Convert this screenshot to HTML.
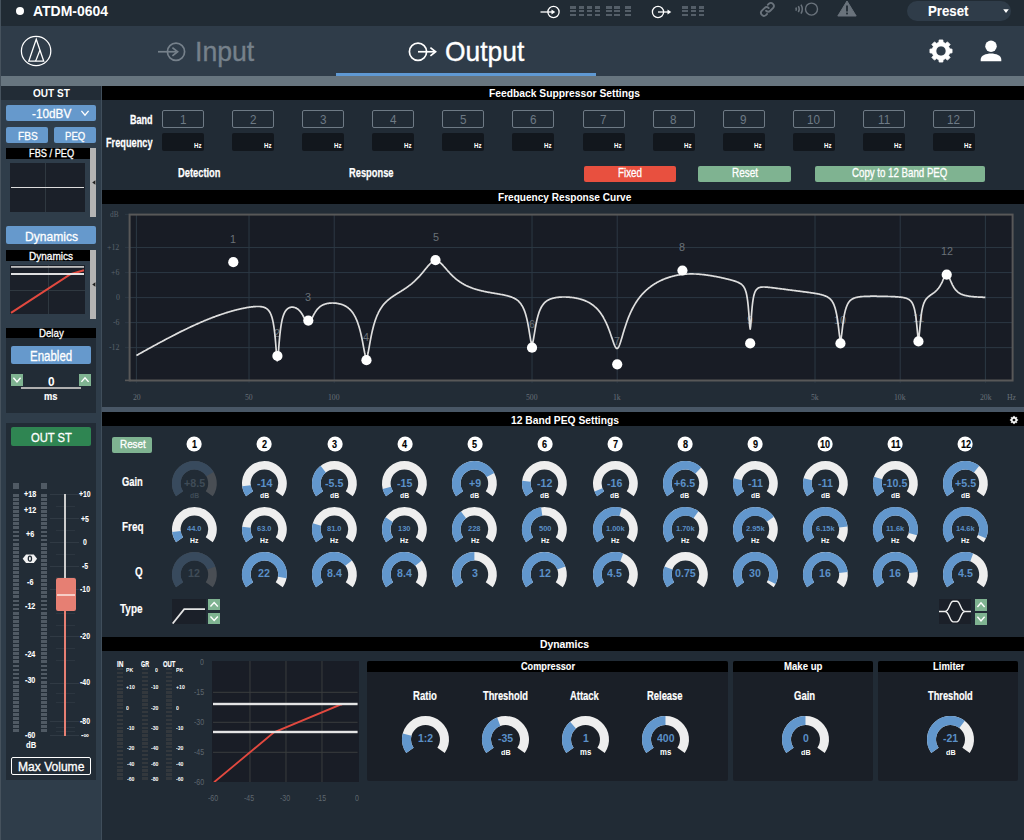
<!DOCTYPE html>
<html lang="en"><head><meta charset="utf-8"><title>ATDM-0604</title>
<style>
html,body{margin:0;padding:0;background:#212b35;}
body{width:1024px;height:840px;position:relative;overflow:hidden;font-family:"Liberation Sans",sans-serif;}
.a{position:absolute;display:block;}
.t{position:absolute;white-space:nowrap;line-height:1;transform-origin:0 0;font-family:"Liberation Sans",sans-serif;}
.b{font-weight:bold;}
.ser{font-family:"Liberation Serif",serif;}
</style></head><body>
<div class="a" style="left:0px;top:0px;width:1024px;height:26px;background:#212b34;"></div>
<div class="a" style="left:16px;top:7px;width:8px;height:8px;background:#fff;border-radius:50%;"></div>
<span class="t b" style="left:32.5px;top:2px;font-size:14.97px;line-height:17px;color:#fff;transform:scaleX(0.933);">ATDM-0604</span>
<svg class="a" style="left:536px;top:2px;" width="36" height="20" viewBox="0 0 36 20">
<circle cx="17.5" cy="10" r="5.6" fill="none" stroke="#fff" stroke-width="1.3"/><path d="M4.5 10H17" stroke="#fff" stroke-width="1.3" fill="none"/><path d="M15.5 7.6L19.3 10L15.5 12.4Z" fill="#fff"/></svg>
<div class="a" style="left:570.4px;top:5.7px;width:5.8px;height:2.9px;background:#545e68;"></div>
<div class="a" style="left:570.4px;top:9.6px;width:5.8px;height:2.9px;background:#545e68;"></div>
<div class="a" style="left:570.4px;top:13.5px;width:5.8px;height:2.9px;background:#545e68;"></div>
<div class="a" style="left:578.5px;top:5.7px;width:5.8px;height:2.9px;background:#545e68;"></div>
<div class="a" style="left:578.5px;top:9.6px;width:5.8px;height:2.9px;background:#545e68;"></div>
<div class="a" style="left:578.5px;top:13.5px;width:5.8px;height:2.9px;background:#545e68;"></div>
<div class="a" style="left:586.6px;top:5.7px;width:5.8px;height:2.9px;background:#545e68;"></div>
<div class="a" style="left:586.6px;top:9.6px;width:5.8px;height:2.9px;background:#545e68;"></div>
<div class="a" style="left:586.6px;top:13.5px;width:5.8px;height:2.9px;background:#545e68;"></div>
<div class="a" style="left:594.7px;top:5.7px;width:5.8px;height:2.9px;background:#545e68;"></div>
<div class="a" style="left:594.7px;top:9.6px;width:5.8px;height:2.9px;background:#545e68;"></div>
<div class="a" style="left:594.7px;top:13.5px;width:5.8px;height:2.9px;background:#545e68;"></div>
<div class="a" style="left:605.8px;top:5.7px;width:5.8px;height:2.9px;background:#545e68;"></div>
<div class="a" style="left:605.8px;top:9.6px;width:5.8px;height:2.9px;background:#545e68;"></div>
<div class="a" style="left:605.8px;top:13.5px;width:5.8px;height:2.9px;background:#545e68;"></div>
<div class="a" style="left:613.8px;top:5.7px;width:5.8px;height:2.9px;background:#545e68;"></div>
<div class="a" style="left:613.8px;top:9.6px;width:5.8px;height:2.9px;background:#545e68;"></div>
<div class="a" style="left:613.8px;top:13.5px;width:5.8px;height:2.9px;background:#545e68;"></div>
<div class="a" style="left:625px;top:5.7px;width:5.8px;height:2.9px;background:#545e68;"></div>
<div class="a" style="left:625px;top:9.6px;width:5.8px;height:2.9px;background:#545e68;"></div>
<div class="a" style="left:625px;top:13.5px;width:5.8px;height:2.9px;background:#545e68;"></div>
<svg class="a" style="left:648px;top:2px;" width="36" height="20" viewBox="0 0 36 20">
<circle cx="10" cy="10" r="5.6" fill="none" stroke="#fff" stroke-width="1.3"/><path d="M10 10H21" stroke="#fff" stroke-width="1.3" fill="none"/><path d="M19.5 7.6L23.3 10L19.5 12.4Z" fill="#fff"/></svg>
<div class="a" style="left:682.4px;top:5.7px;width:5.8px;height:2.9px;background:#545e68;"></div>
<div class="a" style="left:682.4px;top:9.6px;width:5.8px;height:2.9px;background:#545e68;"></div>
<div class="a" style="left:682.4px;top:13.5px;width:5.8px;height:2.9px;background:#545e68;"></div>
<div class="a" style="left:690.5px;top:5.7px;width:5.8px;height:2.9px;background:#545e68;"></div>
<div class="a" style="left:690.5px;top:9.6px;width:5.8px;height:2.9px;background:#545e68;"></div>
<div class="a" style="left:690.5px;top:13.5px;width:5.8px;height:2.9px;background:#545e68;"></div>
<div class="a" style="left:698.6px;top:5.7px;width:5.8px;height:2.9px;background:#545e68;"></div>
<div class="a" style="left:698.6px;top:9.6px;width:5.8px;height:2.9px;background:#545e68;"></div>
<div class="a" style="left:698.6px;top:13.5px;width:5.8px;height:2.9px;background:#545e68;"></div>
<svg class="a" style="left:757.7px;top:0.1px" width="18.8" height="18.8" viewBox="0 0 20 20"><g fill="none" stroke="#6a737c" stroke-width="2" stroke-linecap="round"><path d="M8.6 11.4a3.2 3.2 0 0 0 4.5 0l3-3a3.2 3.2 0 0 0-4.5-4.5l-1.2 1.2"/><path d="M11.4 8.6a3.2 3.2 0 0 0-4.5 0l-3 3a3.2 3.2 0 0 0 4.5 4.5l1.2-1.2"/></g></svg>
<svg class="a" style="left:794px;top:2px;" width="28" height="18" viewBox="0 0 28 18">
<g fill="none" stroke="#6a737c" stroke-width="1.5"><circle cx="17.5" cy="7.1" r="6" stroke-width="1.4"/><path d="M6.96 2.6A8.7 8.7 0 0 1 6.96 11.6"/><path d="M4.35 4.1A5.7 5.7 0 0 1 4.35 10.1"/><path d="M1.8 5.5A2.8 2.8 0 0 1 1.8 8.7"/></g></svg>
<svg class="a" style="left:836px;top:-0.7px;" width="22" height="20" viewBox="0 0 22 20">
<path d="M11 2L20.2 17H1.8Z" fill="#6a737c" stroke="#6a737c" stroke-width="1" stroke-linejoin="round"/><rect x="10.1" y="6.5" width="1.8" height="6" fill="#212b34"/><rect x="10.1" y="13.6" width="1.8" height="1.8" fill="#212b34"/></svg>
<div class="a" style="left:907px;top:1px;width:103.5px;height:20px;background:#2f3c49;border-radius:10px;"></div>
<span class="t b" style="left:927.5px;top:2px;font-size:14.97px;line-height:17px;color:#fff;transform:scaleX(0.885);-webkit-text-stroke:0.09px #fff;">Preset</span>
<svg class="a" style="left:1002px;top:8px;" width="8" height="6" viewBox="0 0 8 6">
<path d="M1.2 1.2H6.8L4 5Z" fill="#fff"/></svg>
<div class="a" style="left:0px;top:26px;width:1024px;height:50px;background:#2f3c49;"></div>
<div class="a" style="left:0px;top:76px;width:1024px;height:10px;background:#67757f;"></div>
<div class="a" style="left:336px;top:72.6px;width:260px;height:3.4px;background:#5f99d3;"></div>
<svg class="a" style="left:18px;top:33px;" width="36" height="36" viewBox="0 0 36 36">
<circle cx="18.1" cy="18" r="14.7" fill="none" stroke="#fff" stroke-width="1.25"/><path d="M18.25 6.2L10.75 28.2H25.75Z" fill="none" stroke="#fff" stroke-width="1.25" stroke-linejoin="miter"/><path d="M21.9 17.3L17.6 28.2" fill="none" stroke="#fff" stroke-width="1.25"/></svg>
<svg class="a" style="left:154px;top:40px;" width="36" height="24" viewBox="0 0 36 24">
<circle cx="22" cy="11.75" r="8.6" fill="none" stroke="#76818b" stroke-width="1.7"/><path d="M4 11.75H22" stroke="#76818b" stroke-width="1.7" fill="none"/><path d="M18.4 7.6L23.6 11.75L18.4 15.9" fill="none" stroke="#76818b" stroke-width="1.7"/></svg>
<span class="t" style="left:194.5px;top:36px;font-size:27.25px;line-height:31px;color:#76818b;transform:scaleX(0.977);-webkit-text-stroke:0.35px #76818b;">Input</span>
<svg class="a" style="left:406px;top:40px;" width="36" height="24" viewBox="0 0 36 24">
<circle cx="12" cy="11.75" r="8.6" fill="none" stroke="#fff" stroke-width="1.7"/><path d="M12 11.75H28.5" stroke="#fff" stroke-width="1.7" fill="none"/><path d="M24.4 7.6L29.6 11.75L24.4 15.9" fill="none" stroke="#fff" stroke-width="1.7"/></svg>
<span class="t" style="left:444.5px;top:36px;font-size:27.25px;line-height:31px;color:#fff;transform:scaleX(0.969);-webkit-text-stroke:0.35px #fff;">Output</span>
<svg class="a" style="left:928.8px;top:38.9px;" width="24" height="24" viewBox="0 0 24 24">
<path d="M9.85 3.36L10.16 0.95L13.84 0.95L14.15 3.36L16.59 4.38L18.51 2.89L21.11 5.49L19.62 7.41L20.64 9.85L23.05 10.16L23.05 13.84L20.64 14.15L19.62 16.59L21.11 18.51L18.51 21.11L16.59 19.62L14.15 20.64L13.84 23.05L10.16 23.05L9.85 20.64L7.41 19.62L5.49 21.11L2.89 18.51L4.38 16.59L3.36 14.15L0.95 13.84L0.95 10.16L3.36 9.85L4.38 7.41L2.89 5.49L5.49 2.89L7.41 4.38ZM6.90 12.00a5.10 5.10 0 1 0 10.20 0a5.10 5.10 0 1 0 -10.20 0Z" fill="#fff" fill-rule="evenodd" stroke="#fff" stroke-width="0.8" stroke-linejoin="round"/>
</svg>
<svg class="a" style="left:979px;top:40px;" width="24" height="24" viewBox="0 0 24 24">
<circle cx="12" cy="6.2" r="5.75" fill="#fff"/><path d="M1.7 21.2V19.4C1.7 15.6 7 13.5 12 13.5S22.3 15.6 22.3 19.4V21.2Z" fill="#fff"/></svg>
<div class="a" style="left:0px;top:86px;width:102px;height:754px;background:#2f3d4a;"></div>
<div class="a" style="left:0px;top:0px;width:1.2px;height:840px;background:#46525d;"></div>
<div class="a" style="left:100.6px;top:86px;width:1.4px;height:754px;background:#404e5b;"></div>
<div class="a" style="left:1px;top:86px;width:100px;height:14px;background:#222c36;"></div>
<span class="t b" style="left:32.5px;top:87px;font-size:11.12px;line-height:12px;color:#fff;transform:scaleX(0.905);">OUT ST</span>
<div class="a" style="left:6px;top:105px;width:90px;height:16px;background:#6699cc;border-radius:2px;"></div>
<span class="t" style="left:32px;top:106px;font-size:13.08px;line-height:15px;color:#fff;transform:scaleX(0.900);-webkit-text-stroke:0.3px #fff;">-10dBV</span>
<svg class="a" style="left:79px;top:107px;" width="12" height="12" viewBox="0 0 12 12">
<path d="M2.4 3.84L6 8.16L9.6 3.84" fill="none" stroke="#fff" stroke-width="1.3"/></svg>
<div class="a" style="left:6px;top:127px;width:42px;height:16px;background:#6699cc;border-radius:2px;"></div>
<div class="a" style="left:54px;top:127px;width:42px;height:16px;background:#6699cc;border-radius:2px;"></div>
<span class="t" style="left:17.5px;top:129px;font-size:11.63px;line-height:13px;color:#fff;transform:scaleX(0.873);-webkit-text-stroke:0.3px #fff;">FBS</span>
<span class="t" style="left:65px;top:129px;font-size:11.63px;line-height:13px;color:#fff;transform:scaleX(0.825);-webkit-text-stroke:0.3px #fff;">PEQ</span>
<div class="a" style="left:6px;top:148px;width:84px;height:11px;background:#000;"></div>
<span class="t" style="left:28.5px;top:147px;font-size:11.26px;line-height:12px;color:#fff;transform:scaleX(0.821);-webkit-text-stroke:0.3px #fff;">FBS / PEQ</span>
<div class="a" style="left:90px;top:148px;width:6px;height:69px;background:#b4b4b4;"></div>
<svg class="a" style="left:91.5px;top:179.8px;" width="4" height="5" viewBox="0 0 4 5">
<path d="M0.2 2.5L3.4 0.3V4.7Z" fill="#222"/></svg>
<div class="a" style="left:10px;top:163px;width:75px;height:49px;background:#1b2029;"></div>
<div class="a" style="left:44.8px;top:163px;width:1px;height:49px;background:#2f3840;"></div>
<div class="a" style="left:11px;top:186.6px;width:73px;height:1.8px;background:#dcdcdc;"></div>
<div class="a" style="left:6px;top:226px;width:90px;height:18.4px;background:#6699cc;border-radius:2px;"></div>
<span class="t" style="left:24.75px;top:229px;font-size:13.44px;line-height:15px;color:#fff;transform:scaleX(0.898);-webkit-text-stroke:0.3px #fff;">Dynamics</span>
<div class="a" style="left:6px;top:250px;width:84px;height:11px;background:#000;"></div>
<span class="t" style="left:29px;top:250px;font-size:10.76px;line-height:12px;color:#fff;transform:scaleX(0.932);-webkit-text-stroke:0.3px #fff;">Dynamics</span>
<div class="a" style="left:90px;top:250px;width:6px;height:69.4px;background:#b4b4b4;"></div>
<svg class="a" style="left:91.5px;top:282.2px;" width="4" height="5" viewBox="0 0 4 5">
<path d="M0.2 2.5L3.4 0.3V4.7Z" fill="#222"/></svg>
<div class="a" style="left:10px;top:265px;width:75px;height:49px;background:#1b2029;"></div>
<div class="a" style="left:47.7px;top:265px;width:1px;height:49px;background:#2f3840;"></div>
<div class="a" style="left:10px;top:290px;width:75px;height:1px;background:#2f3840;"></div>
<svg class="a" style="left:10px;top:265px;" width="75" height="49" viewBox="0 0 75 49">
<path d="M1 47.8L60.5 9.2L74 5.2" fill="none" stroke="#e2493f" stroke-width="2"/><rect x="1" y="1" width="73" height="1.8" fill="#bdbdbd"/><rect x="1" y="8" width="73" height="2" fill="#f0f0f0" opacity="0.92"/></svg>
<div class="a" style="left:6px;top:327.5px;width:90px;height:10.5px;background:#000;"></div>
<div class="a" style="left:6px;top:338px;width:90px;height:75px;background:#222c36;"></div>
<span class="t" style="left:39px;top:327px;font-size:11.41px;line-height:12px;color:#fff;transform:scaleX(0.848);-webkit-text-stroke:0.3px #fff;">Delay</span>
<div class="a" style="left:11px;top:346px;width:80px;height:18.4px;background:#6699cc;border-radius:2px;"></div>
<span class="t" style="left:30px;top:348px;font-size:14.03px;line-height:16px;color:#fff;transform:scaleX(0.821);-webkit-text-stroke:0.3px #fff;">Enabled</span>
<div class="a" style="left:11px;top:374.4px;width:12px;height:11.6px;background:#7fb391;"></div>
<svg class="a" style="left:11px;top:374.4px;" width="12" height="11.6" viewBox="0 0 12 11.6">
<path d="M2.4 3.71L6 7.89L9.6 3.71" fill="none" stroke="#fff" stroke-width="1.4"/></svg>
<div class="a" style="left:79px;top:374.4px;width:12px;height:11.6px;background:#7fb391;"></div>
<svg class="a" style="left:79px;top:374.4px;" width="12" height="11.6" viewBox="0 0 12 11.6">
<path d="M2.4 7.89L6 3.71L9.6 7.89" fill="none" stroke="#fff" stroke-width="1.4"/></svg>
<span class="t b" style="left:48px;top:375px;font-size:12.35px;line-height:14px;color:#fff;transform:scaleX(0.961);">0</span>
<div class="a" style="left:21px;top:387.3px;width:60px;height:1.8px;background:#b0b0b0;"></div>
<span class="t b" style="left:44.3px;top:390px;font-size:11.6px;line-height:12px;color:#fff;transform:scaleX(0.805);-webkit-text-stroke:0.15px #fff;">ms</span>
<div class="a" style="left:6px;top:423px;width:90px;height:356.5px;background:#222c36;"></div>
<div class="a" style="left:11px;top:427px;width:80px;height:18.6px;background:#2f8552;border-radius:2px;"></div>
<span class="t" style="left:30.6px;top:430px;font-size:12.72px;line-height:15px;color:#fff;transform:scaleX(0.881);-webkit-text-stroke:0.3px #fff;">OUT ST</span>
<div class="a" style="left:13px;top:482.5px;width:6px;height:6.9px;background:#505a64;"></div>
<div class="a" style="left:13px;top:494.4px;width:6px;height:239.6px;background:repeating-linear-gradient(to bottom,#505a64 0,#505a64 2.8px,transparent 2.8px,transparent 4.06px);"></div>
<div class="a" style="left:41px;top:482.5px;width:6px;height:6.9px;background:#505a64;"></div>
<div class="a" style="left:41px;top:494.4px;width:6px;height:239.6px;background:repeating-linear-gradient(to bottom,#505a64 0,#505a64 2.8px,transparent 2.8px,transparent 4.06px);"></div>
<span class="t b" style="left:23.92px;top:489px;font-size:8.43px;line-height:10px;color:#fff;transform:scaleX(0.850);-webkit-text-stroke:0.08px #fff;">+18</span>
<span class="t b" style="left:23.92px;top:505px;font-size:8.43px;line-height:10px;color:#fff;transform:scaleX(0.850);-webkit-text-stroke:0.08px #fff;">+12</span>
<span class="t b" style="left:25.92px;top:529px;font-size:8.43px;line-height:10px;color:#fff;transform:scaleX(0.850);-webkit-text-stroke:0.08px #fff;">+6</span>
<span class="t b" style="left:26.81px;top:577px;font-size:8.43px;line-height:10px;color:#fff;transform:scaleX(0.850);-webkit-text-stroke:0.08px #fff;">-6</span>
<span class="t b" style="left:24.82px;top:601px;font-size:8.43px;line-height:10px;color:#fff;transform:scaleX(0.850);-webkit-text-stroke:0.08px #fff;">-12</span>
<span class="t b" style="left:24.82px;top:649px;font-size:8.43px;line-height:10px;color:#fff;transform:scaleX(0.850);-webkit-text-stroke:0.08px #fff;">-24</span>
<span class="t b" style="left:24.82px;top:675px;font-size:8.43px;line-height:10px;color:#fff;transform:scaleX(0.850);-webkit-text-stroke:0.08px #fff;">-30</span>
<span class="t b" style="left:24.82px;top:730px;font-size:8.43px;line-height:10px;color:#fff;transform:scaleX(0.850);-webkit-text-stroke:0.08px #fff;">-60</span>
<span class="t b" style="left:25.69px;top:740px;font-size:9.01px;line-height:10px;color:#fff;transform:scaleX(0.850);-webkit-text-stroke:0.08px #fff;">dB</span>
<svg class="a" style="left:22px;top:553px;" width="16" height="12" viewBox="0 0 16 12">
<path d="M0.7 5.7L4 1.5H11.8L15.1 5.7L11.8 9.9H4Z" fill="#f2f2f2"/><ellipse cx="7.9" cy="5.7" rx="1.6" ry="2.5" fill="none" stroke="#222c36" stroke-width="1.3"/></svg>
<div class="a" style="left:50px;top:493.5px;width:29px;height:1px;background:#303a44;"></div>
<div class="a" style="left:50px;top:518.25px;width:29px;height:1px;background:#303a44;"></div>
<div class="a" style="left:50px;top:541.75px;width:29px;height:1px;background:#303a44;"></div>
<div class="a" style="left:50px;top:565.5px;width:29px;height:1px;background:#303a44;"></div>
<div class="a" style="left:50px;top:589px;width:29px;height:1px;background:#303a44;"></div>
<div class="a" style="left:50px;top:636px;width:29px;height:1px;background:#303a44;"></div>
<div class="a" style="left:50px;top:683px;width:29px;height:1px;background:#303a44;"></div>
<div class="a" style="left:50px;top:721px;width:29px;height:1px;background:#303a44;"></div>
<div class="a" style="left:50px;top:735px;width:29px;height:1px;background:#303a44;"></div>
<div class="a" style="left:56px;top:506px;width:19px;height:1px;background:#2c3640;"></div>
<div class="a" style="left:56px;top:530.1px;width:19px;height:1px;background:#2c3640;"></div>
<div class="a" style="left:56px;top:553.5px;width:19px;height:1px;background:#2c3640;"></div>
<div class="a" style="left:56px;top:577.2px;width:19px;height:1px;background:#2c3640;"></div>
<div class="a" style="left:56px;top:612.5px;width:19px;height:1px;background:#2c3640;"></div>
<div class="a" style="left:56px;top:624.5px;width:19px;height:1px;background:#2c3640;"></div>
<div class="a" style="left:56px;top:647.5px;width:19px;height:1px;background:#2c3640;"></div>
<div class="a" style="left:56px;top:659.5px;width:19px;height:1px;background:#2c3640;"></div>
<div class="a" style="left:56px;top:693px;width:19px;height:1px;background:#2c3640;"></div>
<div class="a" style="left:56px;top:702px;width:19px;height:1px;background:#2c3640;"></div>
<div class="a" style="left:56px;top:726.5px;width:19px;height:1px;background:#2c3640;"></div>
<div class="a" style="left:56px;top:730.5px;width:19px;height:1px;background:#2c3640;"></div>
<div class="a" style="left:64px;top:493.75px;width:2.2px;height:242px;background:#cdcdcd;"></div>
<div class="a" style="left:64px;top:600px;width:2.2px;height:135.6px;background:#e67f73;"></div>
<div class="a" style="left:56px;top:578px;width:20px;height:32.6px;background:#e67f73;border-radius:2px;"></div>
<div class="a" style="left:57px;top:593.8px;width:18px;height:1.9px;background:#f6cdc6;"></div>
<span class="t b" style="left:79.43px;top:490px;font-size:8.14px;line-height:9px;color:#fff;transform:scaleX(0.850);-webkit-text-stroke:0.07px #fff;">+10</span>
<span class="t b" style="left:81.36px;top:515px;font-size:8.14px;line-height:9px;color:#fff;transform:scaleX(0.850);-webkit-text-stroke:0.07px #fff;">+5</span>
<span class="t b" style="left:83.38px;top:538px;font-size:8.14px;line-height:9px;color:#fff;transform:scaleX(0.850);-webkit-text-stroke:0.07px #fff;">0</span>
<span class="t b" style="left:82.22px;top:562px;font-size:8.14px;line-height:9px;color:#fff;transform:scaleX(0.850);-webkit-text-stroke:0.07px #fff;">-5</span>
<span class="t b" style="left:80.3px;top:585px;font-size:8.14px;line-height:9px;color:#fff;transform:scaleX(0.850);-webkit-text-stroke:0.07px #fff;">-10</span>
<span class="t b" style="left:80.3px;top:632px;font-size:8.14px;line-height:9px;color:#fff;transform:scaleX(0.850);-webkit-text-stroke:0.07px #fff;">-20</span>
<span class="t b" style="left:80.3px;top:678px;font-size:8.14px;line-height:9px;color:#fff;transform:scaleX(0.850);-webkit-text-stroke:0.07px #fff;">-40</span>
<span class="t b" style="left:80.3px;top:717px;font-size:8.14px;line-height:9px;color:#fff;transform:scaleX(0.850);-webkit-text-stroke:0.07px #fff;">-80</span>
<span class="t b" style="left:81.47px;top:731px;font-size:8.14px;line-height:9px;color:#fff;transform:scaleX(0.900);">-∞</span>
<div class="a" style="left:11px;top:757px;width:80px;height:18px;background:transparent;border:1px solid #fff;border-radius:2px;box-sizing:border-box;"></div>
<span class="t" style="left:18px;top:760px;font-size:12.5px;line-height:14px;color:#fff;transform:scaleX(0.965);-webkit-text-stroke:0.3px #fff;">Max Volume</span>
<div class="a" style="left:102px;top:86px;width:922px;height:104px;background:#212b35;"></div>
<div class="a" style="left:102px;top:86px;width:922px;height:14px;background:#000;"></div>
<span class="t b" style="left:489px;top:87px;font-size:11.19px;line-height:12px;color:#fff;transform:scaleX(0.920);">Feedback Suppressor Settings</span>
<span class="t b" style="left:129.5px;top:112px;font-size:12.72px;line-height:15px;color:#fff;transform:scaleX(0.708);-webkit-text-stroke:0.28px #fff;">Band</span>
<span class="t b" style="left:105.5px;top:135px;font-size:12.72px;line-height:15px;color:#fff;transform:scaleX(0.723);-webkit-text-stroke:0.26px #fff;">Frequency</span>
<div class="a" style="left:162px;top:110px;width:42px;height:18px;background:transparent;border:1px solid #6e7a85;border-radius:2px;box-sizing:border-box;"></div>
<span class="t" style="left:179.75px;top:112px;font-size:12.72px;line-height:15px;color:#6e7a85;transform:scaleX(0.920);">1</span>
<div class="a" style="left:162px;top:133px;width:42px;height:18px;background:#12171d;border-radius:2px;"></div>
<span class="t b" style="left:193.75px;top:142px;font-size:6.54px;line-height:7px;color:#fff;transform:scaleX(0.938);">Hz</span>
<div class="a" style="left:232px;top:110px;width:42px;height:18px;background:transparent;border:1px solid #6e7a85;border-radius:2px;box-sizing:border-box;"></div>
<span class="t" style="left:249.75px;top:112px;font-size:12.72px;line-height:15px;color:#6e7a85;transform:scaleX(0.920);">2</span>
<div class="a" style="left:232px;top:133px;width:42px;height:18px;background:#12171d;border-radius:2px;"></div>
<span class="t b" style="left:263.75px;top:142px;font-size:6.54px;line-height:7px;color:#fff;transform:scaleX(0.938);">Hz</span>
<div class="a" style="left:302px;top:110px;width:42px;height:18px;background:transparent;border:1px solid #6e7a85;border-radius:2px;box-sizing:border-box;"></div>
<span class="t" style="left:319.75px;top:112px;font-size:12.72px;line-height:15px;color:#6e7a85;transform:scaleX(0.920);">3</span>
<div class="a" style="left:302px;top:133px;width:42px;height:18px;background:#12171d;border-radius:2px;"></div>
<span class="t b" style="left:333.75px;top:142px;font-size:6.54px;line-height:7px;color:#fff;transform:scaleX(0.938);">Hz</span>
<div class="a" style="left:372px;top:110px;width:42px;height:18px;background:transparent;border:1px solid #6e7a85;border-radius:2px;box-sizing:border-box;"></div>
<span class="t" style="left:389.75px;top:112px;font-size:12.72px;line-height:15px;color:#6e7a85;transform:scaleX(0.920);">4</span>
<div class="a" style="left:372px;top:133px;width:42px;height:18px;background:#12171d;border-radius:2px;"></div>
<span class="t b" style="left:403.75px;top:142px;font-size:6.54px;line-height:7px;color:#fff;transform:scaleX(0.938);">Hz</span>
<div class="a" style="left:442px;top:110px;width:42px;height:18px;background:transparent;border:1px solid #6e7a85;border-radius:2px;box-sizing:border-box;"></div>
<span class="t" style="left:459.75px;top:112px;font-size:12.72px;line-height:15px;color:#6e7a85;transform:scaleX(0.920);">5</span>
<div class="a" style="left:442px;top:133px;width:42px;height:18px;background:#12171d;border-radius:2px;"></div>
<span class="t b" style="left:473.75px;top:142px;font-size:6.54px;line-height:7px;color:#fff;transform:scaleX(0.938);">Hz</span>
<div class="a" style="left:512px;top:110px;width:42px;height:18px;background:transparent;border:1px solid #6e7a85;border-radius:2px;box-sizing:border-box;"></div>
<span class="t" style="left:529.75px;top:112px;font-size:12.72px;line-height:15px;color:#6e7a85;transform:scaleX(0.920);">6</span>
<div class="a" style="left:512px;top:133px;width:42px;height:18px;background:#12171d;border-radius:2px;"></div>
<span class="t b" style="left:543.75px;top:142px;font-size:6.54px;line-height:7px;color:#fff;transform:scaleX(0.938);">Hz</span>
<div class="a" style="left:582.6px;top:110px;width:42px;height:18px;background:transparent;border:1px solid #6e7a85;border-radius:2px;box-sizing:border-box;"></div>
<span class="t" style="left:600.35px;top:112px;font-size:12.72px;line-height:15px;color:#6e7a85;transform:scaleX(0.920);">7</span>
<div class="a" style="left:582.6px;top:133px;width:42px;height:18px;background:#12171d;border-radius:2px;"></div>
<span class="t b" style="left:614.35px;top:142px;font-size:6.54px;line-height:7px;color:#fff;transform:scaleX(0.938);">Hz</span>
<div class="a" style="left:652.6px;top:110px;width:42px;height:18px;background:transparent;border:1px solid #6e7a85;border-radius:2px;box-sizing:border-box;"></div>
<span class="t" style="left:670.35px;top:112px;font-size:12.72px;line-height:15px;color:#6e7a85;transform:scaleX(0.920);">8</span>
<div class="a" style="left:652.6px;top:133px;width:42px;height:18px;background:#12171d;border-radius:2px;"></div>
<span class="t b" style="left:684.35px;top:142px;font-size:6.54px;line-height:7px;color:#fff;transform:scaleX(0.938);">Hz</span>
<div class="a" style="left:722.6px;top:110px;width:42px;height:18px;background:transparent;border:1px solid #6e7a85;border-radius:2px;box-sizing:border-box;"></div>
<span class="t" style="left:740.35px;top:112px;font-size:12.72px;line-height:15px;color:#6e7a85;transform:scaleX(0.920);">9</span>
<div class="a" style="left:722.6px;top:133px;width:42px;height:18px;background:#12171d;border-radius:2px;"></div>
<span class="t b" style="left:754.35px;top:142px;font-size:6.54px;line-height:7px;color:#fff;transform:scaleX(0.938);">Hz</span>
<div class="a" style="left:792.6px;top:110px;width:42px;height:18px;background:transparent;border:1px solid #6e7a85;border-radius:2px;box-sizing:border-box;"></div>
<span class="t" style="left:807.09px;top:112px;font-size:12.72px;line-height:15px;color:#6e7a85;transform:scaleX(0.920);">10</span>
<div class="a" style="left:792.6px;top:133px;width:42px;height:18px;background:#12171d;border-radius:2px;"></div>
<span class="t b" style="left:824.35px;top:142px;font-size:6.54px;line-height:7px;color:#fff;transform:scaleX(0.938);">Hz</span>
<div class="a" style="left:862.6px;top:110px;width:42px;height:18px;background:transparent;border:1px solid #6e7a85;border-radius:2px;box-sizing:border-box;"></div>
<span class="t" style="left:877.53px;top:112px;font-size:12.72px;line-height:15px;color:#6e7a85;transform:scaleX(0.920);">11</span>
<div class="a" style="left:862.6px;top:133px;width:42px;height:18px;background:#12171d;border-radius:2px;"></div>
<span class="t b" style="left:894.35px;top:142px;font-size:6.54px;line-height:7px;color:#fff;transform:scaleX(0.938);">Hz</span>
<div class="a" style="left:932.6px;top:110px;width:42px;height:18px;background:transparent;border:1px solid #6e7a85;border-radius:2px;box-sizing:border-box;"></div>
<span class="t" style="left:947.09px;top:112px;font-size:12.72px;line-height:15px;color:#6e7a85;transform:scaleX(0.920);">12</span>
<div class="a" style="left:932.6px;top:133px;width:42px;height:18px;background:#12171d;border-radius:2px;"></div>
<span class="t b" style="left:964.35px;top:142px;font-size:6.54px;line-height:7px;color:#fff;transform:scaleX(0.938);">Hz</span>
<span class="t b" style="left:177.5px;top:165px;font-size:12.72px;line-height:15px;color:#fff;transform:scaleX(0.733);-webkit-text-stroke:0.25px #fff;">Detection</span>
<span class="t b" style="left:349px;top:165px;font-size:12.72px;line-height:15px;color:#fff;transform:scaleX(0.732);-webkit-text-stroke:0.25px #fff;">Response</span>
<div class="a" style="left:583.6px;top:165.5px;width:92px;height:16px;background:#e8503f;border-radius:2px;"></div>
<span class="t" style="left:617.5px;top:166px;font-size:12.35px;line-height:14px;color:#fff;transform:scaleX(0.794);-webkit-text-stroke:0.3px #fff;">Fixed</span>
<div class="a" style="left:698px;top:165.5px;width:93px;height:16px;background:#7fb391;border-radius:2px;"></div>
<span class="t" style="left:732px;top:166px;font-size:12.35px;line-height:14px;color:#fff;transform:scaleX(0.806);-webkit-text-stroke:0.3px #fff;">Reset</span>
<div class="a" style="left:814.6px;top:165.5px;width:170.4px;height:16px;background:#7fb391;border-radius:2px;"></div>
<span class="t" style="left:852px;top:166px;font-size:12.35px;line-height:14px;color:#fff;transform:scaleX(0.785);-webkit-text-stroke:0.3px #fff;">Copy to 12 Band PEQ</span>
<div class="a" style="left:102px;top:190px;width:922px;height:13.8px;background:#000;"></div>
<span class="t b" style="left:497.6px;top:191px;font-size:11.19px;line-height:12px;color:#fff;transform:scaleX(0.901);">Frequency Response Curve</span>
<div class="a" style="left:102px;top:204px;width:922px;height:203px;background:#222c36;"></div>
<div class="a" style="left:102px;top:407.4px;width:922px;height:5.1px;background:#495766;"></div>
<svg class="a" style="left:100px;top:204px;" width="924" height="203" viewBox="0 0 924 203">
<rect x="29" y="10" width="884" height="167" fill="#181c25"/>
<path d="M36.4 11V179" stroke="#2c3844" stroke-width="1" fill="none"/>
<path d="M149.02 11V179" stroke="#2c3844" stroke-width="1" fill="none"/>
<path d="M234.21 11V179" stroke="#2c3844" stroke-width="1" fill="none"/>
<path d="M432.02 11V179" stroke="#2c3844" stroke-width="1" fill="none"/>
<path d="M517.21 11V179" stroke="#2c3844" stroke-width="1" fill="none"/>
<path d="M715.02 11V179" stroke="#2c3844" stroke-width="1" fill="none"/>
<path d="M800.21 11V179" stroke="#2c3844" stroke-width="1" fill="none"/>
<path d="M885.4 11V179" stroke="#2c3844" stroke-width="1" fill="none"/>
<path d="M25 43.56H912" stroke="#2c3844" stroke-width="1" fill="none"/>
<path d="M25 68.58H912" stroke="#2c3844" stroke-width="1" fill="none"/>
<path d="M25 93.6H912" stroke="#2c3844" stroke-width="1" fill="none"/>
<path d="M25 118.62H912" stroke="#2c3844" stroke-width="1" fill="none"/>
<path d="M25 143.64H912" stroke="#2c3844" stroke-width="1" fill="none"/>
<path d="M25 10.4H31" stroke="#2c3844" stroke-width="1" fill="none"/>
<rect x="29.6" y="10.6" width="883" height="165.9" fill="none" stroke="#585858" stroke-width="2"/>
<path d="M25 176.4H31" stroke="#585858" stroke-width="1.6" fill="none"/>
</svg>
<span class="t" style="left:230.31px;top:233px;font-size:11.34px;line-height:12px;color:#6a7178;transform:scaleX(0.950);">1</span>
<span class="t" style="left:274.43px;top:327px;font-size:11.34px;line-height:12px;color:#6a7178;transform:scaleX(0.950);">2</span>
<span class="t" style="left:305.31px;top:291px;font-size:11.34px;line-height:12px;color:#6a7178;transform:scaleX(0.950);">3</span>
<span class="t" style="left:363.46px;top:331px;font-size:11.34px;line-height:12px;color:#6a7178;transform:scaleX(0.950);">4</span>
<span class="t" style="left:432.51px;top:231px;font-size:11.34px;line-height:12px;color:#6a7178;transform:scaleX(0.950);">5</span>
<span class="t" style="left:529.02px;top:318px;font-size:11.34px;line-height:12px;color:#6a7178;transform:scaleX(0.950);">6</span>
<span class="t" style="left:614.21px;top:335px;font-size:11.34px;line-height:12px;color:#6a7178;transform:scaleX(0.950);">7</span>
<span class="t" style="left:679.43px;top:241px;font-size:11.34px;line-height:12px;color:#6a7178;transform:scaleX(0.950);">8</span>
<span class="t" style="left:747.17px;top:314px;font-size:11.34px;line-height:12px;color:#6a7178;transform:scaleX(0.950);">9</span>
<span class="t" style="left:834.47px;top:314px;font-size:11.34px;line-height:12px;color:#6a7178;transform:scaleX(0.950);">10</span>
<span class="t" style="left:912.86px;top:312px;font-size:11.34px;line-height:12px;color:#6a7178;transform:scaleX(0.950);">11</span>
<span class="t" style="left:940.73px;top:245px;font-size:11.34px;line-height:12px;color:#6a7178;transform:scaleX(0.950);">12</span>
<svg class="a" style="left:100px;top:204px;" width="924" height="203" viewBox="0 0 924 203">
<path d="M36.4 151.5L36.9 151.2L37.4 150.9L37.9 150.7L38.4 150.4L38.9 150.1L39.4 149.8L39.9 149.5L40.4 149.3L40.9 149.0L41.4 148.7L41.9 148.4L42.4 148.1L42.9 147.9L43.4 147.6L43.9 147.3L44.4 147.0L44.9 146.7L45.4 146.5L45.9 146.2L46.4 145.9L46.9 145.6L47.4 145.4L47.9 145.1L48.4 144.8L48.9 144.5L49.4 144.3L49.9 144.0L50.4 143.7L50.9 143.4L51.4 143.2L51.9 142.9L52.4 142.6L52.9 142.3L53.4 142.1L53.9 141.8L54.4 141.5L54.9 141.2L55.4 141.0L55.9 140.7L56.4 140.4L56.9 140.2L57.4 139.9L57.9 139.6L58.4 139.3L58.9 139.1L59.4 138.8L59.9 138.5L60.4 138.3L60.9 138.0L61.4 137.7L61.9 137.5L62.4 137.2L62.9 136.9L63.4 136.7L63.9 136.4L64.4 136.1L64.9 135.9L65.4 135.6L65.9 135.3L66.4 135.1L66.9 134.8L67.4 134.5L67.9 134.3L68.4 134.0L68.9 133.8L69.4 133.5L69.9 133.2L70.4 133.0L70.9 132.7L71.4 132.5L71.9 132.2L72.4 131.9L72.9 131.7L73.4 131.4L73.9 131.2L74.4 130.9L74.9 130.7L75.4 130.4L75.9 130.1L76.4 129.9L76.9 129.6L77.4 129.4L77.9 129.1L78.4 128.9L78.9 128.6L79.3 128.4L79.8 128.1L80.3 127.9L80.8 127.6L81.3 127.4L81.8 127.1L82.3 126.9L82.8 126.7L83.3 126.4L83.8 126.2L84.3 125.9L84.8 125.7L85.3 125.4L85.8 125.2L86.3 125.0L86.8 124.7L87.3 124.5L87.8 124.2L88.3 124.0L88.8 123.8L89.3 123.5L89.8 123.3L90.3 123.1L90.8 122.8L91.3 122.6L91.8 122.4L92.3 122.1L92.8 121.9L93.3 121.7L93.8 121.4L94.3 121.2L94.8 121.0L95.3 120.8L95.8 120.5L96.3 120.3L96.8 120.1L97.3 119.9L97.8 119.6L98.3 119.4L98.8 119.2L99.3 119.0L99.8 118.8L100.3 118.5L100.8 118.3L101.3 118.1L101.8 117.9L102.3 117.7L102.8 117.5L103.3 117.2L103.8 117.0L104.3 116.8L104.8 116.6L105.3 116.4L105.8 116.2L106.3 116.0L106.8 115.8L107.3 115.6L107.8 115.4L108.3 115.2L108.8 115.0L109.3 114.8L109.8 114.6L110.3 114.4L110.8 114.2L111.3 114.0L111.8 113.8L112.3 113.6L112.8 113.4L113.3 113.2L113.8 113.1L114.3 112.9L114.8 112.7L115.3 112.5L115.8 112.3L116.3 112.1L116.8 111.9L117.3 111.8L117.8 111.6L118.3 111.4L118.8 111.2L119.3 111.1L119.8 110.9L120.3 110.7L120.8 110.5L121.3 110.4L121.8 110.2L122.3 110.0L122.8 109.9L123.3 109.7L123.8 109.5L124.3 109.4L124.8 109.2L125.3 109.0L125.8 108.9L126.3 108.7L126.8 108.6L127.3 108.4L127.8 108.3L128.3 108.1L128.8 108.0L129.3 107.8L129.8 107.7L130.3 107.5L130.8 107.4L131.3 107.2L131.8 107.1L132.3 107.0L132.8 106.8L133.3 106.7L133.8 106.5L134.3 106.4L134.8 106.3L135.3 106.1L135.8 106.0L136.3 105.9L136.8 105.8L137.3 105.6L137.8 105.5L138.3 105.4L138.8 105.3L139.3 105.2L139.8 105.0L140.3 104.9L140.8 104.8L141.3 104.7L141.8 104.6L142.3 104.5L142.8 104.4L143.3 104.3L143.8 104.2L144.3 104.1L144.8 104.0L145.3 103.9L145.8 103.8L146.3 103.7L146.8 103.6L147.3 103.5L147.8 103.4L148.3 103.4L148.8 103.3L149.3 103.2L149.8 103.1L150.3 103.1L150.8 103.0L151.3 102.9L151.8 102.9L152.3 102.8L152.8 102.8L153.3 102.7L153.8 102.7L154.3 102.6L154.8 102.6L155.3 102.6L155.8 102.5L156.3 102.5L156.8 102.5L157.3 102.5L157.8 102.5L158.3 102.5L158.8 102.5L159.3 102.5L159.8 102.5L160.3 102.6L160.8 102.6L161.3 102.7L161.8 102.8L162.3 102.9L162.8 103.0L163.3 103.1L163.8 103.2L164.2 103.4L164.7 103.6L165.2 103.8L165.7 104.1L166.2 104.3L166.7 104.7L167.2 105.1L167.7 105.5L168.2 106.0L168.7 106.6L169.2 107.2L169.7 108.0L170.2 108.9L170.7 110.0L171.2 111.2L171.7 112.6L172.2 114.3L172.7 116.3L173.2 118.7L173.7 121.6L174.2 125.0L174.7 129.1L175.2 133.9L175.7 139.7L176.2 146.2L176.7 152.6L177.2 156.8L177.7 156.1L178.2 151.1L178.7 144.5L179.2 138.1L179.7 132.5L180.2 127.8L180.7 123.9L181.2 120.6L181.7 117.9L182.2 115.5L182.7 113.6L183.2 112.0L183.7 110.6L184.2 109.4L184.7 108.4L185.2 107.5L185.7 106.7L186.2 106.1L186.7 105.5L187.2 105.1L187.7 104.7L188.2 104.3L188.7 104.0L189.2 103.8L189.7 103.6L190.2 103.4L190.7 103.3L191.2 103.2L191.7 103.2L192.2 103.2L192.7 103.2L193.2 103.2L193.7 103.3L194.2 103.4L194.7 103.5L195.2 103.7L195.7 103.9L196.2 104.1L196.7 104.4L197.2 104.7L197.7 105.0L198.2 105.4L198.7 105.9L199.2 106.3L199.7 106.9L200.2 107.4L200.7 108.1L201.2 108.8L201.7 109.5L202.2 110.3L202.7 111.1L203.2 112.0L203.7 113.0L204.2 113.9L204.7 114.9L205.2 115.8L205.7 116.7L206.2 117.5L206.7 118.2L207.2 118.8L207.7 119.1L208.2 119.3L208.7 119.2L209.2 118.9L209.7 118.3L210.2 117.6L210.7 116.8L211.2 115.9L211.7 114.9L212.2 113.9L212.7 112.9L213.2 111.9L213.7 110.9L214.2 109.9L214.7 109.1L215.2 108.2L215.7 107.4L216.2 106.7L216.7 106.0L217.2 105.4L217.7 104.8L218.2 104.3L218.7 103.8L219.2 103.3L219.7 102.9L220.2 102.5L220.7 102.2L221.2 101.8L221.7 101.5L222.2 101.3L222.7 101.0L223.2 100.8L223.7 100.6L224.2 100.4L224.7 100.2L225.2 100.0L225.7 99.9L226.2 99.8L226.7 99.6L227.2 99.5L227.7 99.4L228.2 99.4L228.7 99.3L229.2 99.2L229.7 99.2L230.2 99.1L230.7 99.1L231.2 99.1L231.7 99.0L232.2 99.0L232.7 99.0L233.2 99.0L233.7 99.1L234.2 99.1L234.7 99.1L235.2 99.1L235.7 99.2L236.2 99.2L236.7 99.3L237.2 99.4L237.7 99.5L238.2 99.6L238.7 99.7L239.2 99.8L239.7 99.9L240.2 100.0L240.7 100.1L241.2 100.3L241.7 100.5L242.2 100.6L242.7 100.8L243.2 101.0L243.7 101.2L244.2 101.4L244.7 101.7L245.2 101.9L245.7 102.2L246.2 102.5L246.7 102.8L247.2 103.2L247.7 103.5L248.2 103.9L248.6 104.3L249.1 104.7L249.6 105.2L250.1 105.7L250.6 106.2L251.1 106.7L251.6 107.3L252.1 107.9L252.6 108.6L253.1 109.3L253.6 110.1L254.1 110.9L254.6 111.8L255.1 112.7L255.6 113.7L256.1 114.8L256.6 115.9L257.1 117.1L257.6 118.4L258.1 119.9L258.6 121.4L259.1 123.0L259.6 124.7L260.1 126.6L260.6 128.6L261.1 130.7L261.6 133.0L262.1 135.4L262.6 137.9L263.1 140.6L263.6 143.3L264.1 145.9L264.6 148.5L265.1 150.7L265.6 152.4L266.1 153.3L266.6 153.4L267.1 152.6L267.6 151.0L268.1 148.8L268.6 146.2L269.1 143.5L269.6 140.6L270.1 137.9L270.6 135.2L271.1 132.6L271.6 130.2L272.1 127.9L272.6 125.7L273.1 123.7L273.6 121.8L274.1 120.0L274.6 118.4L275.1 116.8L275.6 115.4L276.1 114.0L276.6 112.7L277.1 111.5L277.6 110.3L278.1 109.3L278.6 108.2L279.1 107.3L279.6 106.4L280.1 105.5L280.6 104.7L281.1 103.9L281.6 103.2L282.1 102.5L282.6 101.8L283.1 101.1L283.6 100.5L284.1 99.9L284.6 99.4L285.1 98.8L285.6 98.3L286.1 97.8L286.6 97.3L287.1 96.9L287.6 96.4L288.1 96.0L288.6 95.6L289.1 95.2L289.6 94.8L290.1 94.4L290.6 94.0L291.1 93.6L291.6 93.3L292.1 92.9L292.6 92.6L293.1 92.2L293.6 91.9L294.1 91.6L294.6 91.2L295.1 90.9L295.6 90.6L296.1 90.3L296.6 90.0L297.1 89.6L297.6 89.3L298.1 89.0L298.6 88.7L299.1 88.4L299.6 88.1L300.1 87.8L300.6 87.5L301.1 87.2L301.6 86.8L302.1 86.5L302.6 86.2L303.1 85.9L303.6 85.6L304.1 85.2L304.6 84.9L305.1 84.6L305.6 84.2L306.1 83.9L306.6 83.5L307.1 83.2L307.6 82.8L308.1 82.5L308.6 82.1L309.1 81.7L309.6 81.3L310.1 81.0L310.6 80.6L311.1 80.2L311.6 79.8L312.1 79.3L312.6 78.9L313.1 78.5L313.6 78.0L314.1 77.6L314.6 77.1L315.1 76.7L315.6 76.2L316.1 75.7L316.6 75.2L317.1 74.7L317.6 74.2L318.1 73.7L318.6 73.2L319.1 72.6L319.6 72.1L320.1 71.5L320.6 70.9L321.1 70.4L321.6 69.8L322.1 69.2L322.6 68.6L323.1 68.0L323.6 67.4L324.1 66.8L324.6 66.1L325.1 65.5L325.6 64.9L326.1 64.3L326.6 63.7L327.1 63.1L327.6 62.5L328.1 61.9L328.6 61.3L329.1 60.8L329.6 60.3L330.1 59.7L330.6 59.3L331.1 58.8L331.6 58.4L332.1 58.0L332.6 57.7L333.1 57.4L333.5 57.1L334.0 57.0L334.5 56.8L335.0 56.7L335.5 56.7L336.0 56.7L336.5 56.7L337.0 56.9L337.5 57.0L338.0 57.2L338.5 57.5L339.0 57.8L339.5 58.2L340.0 58.5L340.5 59.0L341.0 59.4L341.5 59.9L342.0 60.4L342.5 60.9L343.0 61.4L343.5 62.0L344.0 62.5L344.5 63.1L345.0 63.7L345.5 64.2L346.0 64.8L346.5 65.4L347.0 66.0L347.5 66.5L348.0 67.1L348.5 67.6L349.0 68.2L349.5 68.7L350.0 69.3L350.5 69.8L351.0 70.3L351.5 70.8L352.0 71.3L352.5 71.8L353.0 72.3L353.5 72.8L354.0 73.2L354.5 73.7L355.0 74.1L355.5 74.6L356.0 75.0L356.5 75.4L357.0 75.8L357.5 76.2L358.0 76.5L358.5 76.9L359.0 77.3L359.5 77.6L360.0 78.0L360.5 78.3L361.0 78.6L361.5 78.9L362.0 79.3L362.5 79.6L363.0 79.8L363.5 80.1L364.0 80.4L364.5 80.7L365.0 80.9L365.5 81.2L366.0 81.5L366.5 81.7L367.0 81.9L367.5 82.2L368.0 82.4L368.5 82.6L369.0 82.8L369.5 83.0L370.0 83.2L370.5 83.4L371.0 83.6L371.5 83.8L372.0 84.0L372.5 84.2L373.0 84.4L373.5 84.5L374.0 84.7L374.5 84.9L375.0 85.0L375.5 85.2L376.0 85.3L376.5 85.5L377.0 85.6L377.5 85.8L378.0 85.9L378.5 86.0L379.0 86.2L379.5 86.3L380.0 86.4L380.5 86.5L381.0 86.7L381.5 86.8L382.0 86.9L382.5 87.0L383.0 87.1L383.5 87.2L384.0 87.4L384.5 87.5L385.0 87.6L385.5 87.7L386.0 87.8L386.5 87.9L387.0 88.0L387.5 88.1L388.0 88.2L388.5 88.3L389.0 88.3L389.5 88.4L390.0 88.5L390.5 88.6L391.0 88.7L391.5 88.8L392.0 88.9L392.5 89.0L393.0 89.1L393.5 89.1L394.0 89.2L394.5 89.3L395.0 89.4L395.5 89.5L396.0 89.6L396.5 89.7L397.0 89.7L397.5 89.8L398.0 89.9L398.5 90.0L399.0 90.1L399.5 90.2L400.0 90.3L400.5 90.4L401.0 90.5L401.5 90.5L402.0 90.6L402.5 90.7L403.0 90.8L403.5 90.9L404.0 91.0L404.5 91.1L405.0 91.3L405.5 91.4L406.0 91.5L406.5 91.6L407.0 91.7L407.5 91.8L408.0 92.0L408.5 92.1L409.0 92.3L409.5 92.4L410.0 92.6L410.5 92.7L411.0 92.9L411.5 93.1L412.0 93.3L412.5 93.5L413.0 93.7L413.5 93.9L414.0 94.1L414.5 94.4L415.0 94.7L415.5 94.9L416.0 95.3L416.5 95.6L417.0 95.9L417.5 96.3L418.0 96.7L418.5 97.1L418.9 97.6L419.4 98.1L419.9 98.7L420.4 99.3L420.9 99.9L421.4 100.7L421.9 101.4L422.4 102.3L422.9 103.2L423.4 104.3L423.9 105.4L424.4 106.6L424.9 108.0L425.4 109.5L425.9 111.2L426.4 113.1L426.9 115.1L427.4 117.4L427.9 119.8L428.4 122.5L428.9 125.4L429.4 128.5L429.9 131.6L430.4 134.6L430.9 137.3L431.4 139.2L431.9 140.1L432.4 139.6L432.9 138.1L433.4 135.6L433.9 132.7L434.4 129.6L434.9 126.6L435.4 123.6L435.9 120.9L436.4 118.4L436.9 116.1L437.4 114.0L437.9 112.1L438.4 110.4L438.9 108.8L439.4 107.4L439.9 106.2L440.4 105.0L440.9 104.0L441.4 103.0L441.9 102.2L442.4 101.4L442.9 100.7L443.4 100.1L443.9 99.5L444.4 98.9L444.9 98.4L445.4 98.0L445.9 97.6L446.4 97.2L446.9 96.8L447.4 96.5L447.9 96.2L448.4 95.9L448.9 95.7L449.4 95.4L449.9 95.2L450.4 95.0L450.9 94.8L451.4 94.7L451.9 94.5L452.4 94.4L452.9 94.2L453.4 94.1L453.9 94.0L454.4 93.9L454.9 93.8L455.4 93.7L455.9 93.6L456.4 93.5L456.9 93.4L457.4 93.4L457.9 93.3L458.4 93.3L458.9 93.2L459.4 93.2L459.9 93.1L460.4 93.1L460.9 93.1L461.4 93.1L461.9 93.0L462.4 93.0L462.9 93.0L463.4 93.0L463.9 93.0L464.4 93.0L464.9 93.0L465.4 93.0L465.9 93.0L466.4 93.1L466.9 93.1L467.4 93.1L467.9 93.1L468.4 93.2L468.9 93.2L469.4 93.2L469.9 93.3L470.4 93.3L470.9 93.4L471.4 93.4L471.9 93.5L472.4 93.5L472.9 93.6L473.4 93.7L473.9 93.7L474.4 93.8L474.9 93.9L475.4 94.0L475.9 94.1L476.4 94.2L476.9 94.3L477.4 94.4L477.9 94.5L478.4 94.6L478.9 94.7L479.4 94.9L479.9 95.0L480.4 95.1L480.9 95.3L481.4 95.4L481.9 95.6L482.4 95.7L482.9 95.9L483.4 96.1L483.9 96.3L484.4 96.4L484.9 96.6L485.4 96.9L485.9 97.1L486.4 97.3L486.9 97.5L487.4 97.8L487.9 98.0L488.4 98.3L488.9 98.5L489.4 98.8L489.9 99.1L490.4 99.4L490.9 99.7L491.4 100.1L491.9 100.4L492.4 100.8L492.9 101.1L493.4 101.5L493.9 101.9L494.4 102.3L494.9 102.8L495.4 103.2L495.9 103.7L496.4 104.2L496.9 104.7L497.4 105.2L497.9 105.7L498.4 106.3L498.9 106.9L499.4 107.5L499.9 108.1L500.4 108.8L500.9 109.5L501.4 110.2L501.9 111.0L502.4 111.7L502.9 112.5L503.4 113.4L503.8 114.3L504.3 115.2L504.8 116.1L505.3 117.1L505.8 118.1L506.3 119.2L506.8 120.3L507.3 121.4L507.8 122.6L508.3 123.9L508.8 125.2L509.3 126.5L509.8 127.9L510.3 129.3L510.8 130.7L511.3 132.2L511.8 133.6L512.3 135.1L512.8 136.6L513.3 138.0L513.8 139.4L514.3 140.7L514.8 141.9L515.3 142.9L515.8 143.7L516.3 144.2L516.8 144.5L517.3 144.4L517.8 144.1L518.3 143.5L518.8 142.6L519.3 141.5L519.8 140.2L520.3 138.8L520.8 137.2L521.3 135.6L521.8 133.9L522.3 132.2L522.8 130.5L523.3 128.8L523.8 127.2L524.3 125.5L524.8 123.9L525.3 122.4L525.8 120.9L526.3 119.4L526.8 118.0L527.3 116.6L527.8 115.2L528.3 113.9L528.8 112.7L529.3 111.5L529.8 110.3L530.3 109.2L530.8 108.1L531.3 107.0L531.8 106.0L532.3 105.0L532.8 104.0L533.3 103.1L533.8 102.2L534.3 101.3L534.8 100.4L535.3 99.6L535.8 98.8L536.3 98.0L536.8 97.2L537.3 96.5L537.8 95.8L538.3 95.1L538.8 94.4L539.3 93.8L539.8 93.1L540.3 92.5L540.8 91.9L541.3 91.3L541.8 90.7L542.3 90.2L542.8 89.6L543.3 89.1L543.8 88.6L544.3 88.1L544.8 87.6L545.3 87.1L545.8 86.6L546.3 86.2L546.8 85.7L547.3 85.3L547.8 84.9L548.3 84.4L548.8 84.0L549.3 83.6L549.8 83.2L550.3 82.9L550.8 82.5L551.3 82.1L551.8 81.8L552.3 81.4L552.8 81.1L553.3 80.8L553.8 80.4L554.3 80.1L554.8 79.8L555.3 79.5L555.8 79.2L556.3 78.9L556.8 78.6L557.3 78.3L557.8 78.1L558.3 77.8L558.8 77.5L559.3 77.3L559.8 77.0L560.3 76.8L560.8 76.6L561.3 76.3L561.8 76.1L562.3 75.9L562.8 75.6L563.3 75.4L563.8 75.2L564.3 75.0L564.8 74.8L565.3 74.6L565.8 74.4L566.3 74.3L566.8 74.1L567.3 73.9L567.8 73.7L568.3 73.6L568.8 73.4L569.3 73.2L569.8 73.1L570.3 72.9L570.8 72.8L571.3 72.6L571.8 72.5L572.3 72.4L572.8 72.2L573.3 72.1L573.8 72.0L574.3 71.9L574.8 71.7L575.3 71.6L575.8 71.5L576.3 71.4L576.8 71.3L577.3 71.2L577.8 71.1L578.3 71.0L578.8 71.0L579.3 70.9L579.8 70.8L580.3 70.7L580.8 70.7L581.3 70.6L581.8 70.5L582.3 70.5L582.8 70.4L583.3 70.3L583.8 70.3L584.3 70.3L584.8 70.2L585.3 70.2L585.8 70.1L586.3 70.1L586.8 70.1L587.3 70.0L587.8 70.0L588.2 70.0L588.7 70.0L589.2 70.0L589.7 69.9L590.2 69.9L590.7 69.9L591.2 69.9L591.7 69.9L592.2 69.9L592.7 69.9L593.2 69.9L593.7 70.0L594.2 70.0L594.7 70.0L595.2 70.0L595.7 70.0L596.2 70.0L596.7 70.1L597.2 70.1L597.7 70.1L598.2 70.2L598.7 70.2L599.2 70.2L599.7 70.3L600.2 70.3L600.7 70.4L601.2 70.4L601.7 70.5L602.2 70.5L602.7 70.6L603.2 70.6L603.7 70.7L604.2 70.7L604.7 70.8L605.2 70.9L605.7 70.9L606.2 71.0L606.7 71.1L607.2 71.1L607.7 71.2L608.2 71.3L608.7 71.3L609.2 71.4L609.7 71.5L610.2 71.6L610.7 71.7L611.2 71.7L611.7 71.8L612.2 71.9L612.7 72.0L613.2 72.1L613.7 72.2L614.2 72.3L614.7 72.4L615.2 72.4L615.7 72.5L616.2 72.6L616.7 72.7L617.2 72.8L617.7 72.9L618.2 73.0L618.7 73.1L619.2 73.2L619.7 73.3L620.2 73.4L620.7 73.5L621.2 73.6L621.7 73.8L622.2 73.9L622.7 74.0L623.2 74.1L623.7 74.2L624.2 74.3L624.7 74.4L625.2 74.5L625.7 74.7L626.2 74.8L626.7 74.9L627.2 75.0L627.7 75.1L628.2 75.3L628.7 75.4L629.2 75.5L629.7 75.6L630.2 75.8L630.7 75.9L631.2 76.0L631.7 76.2L632.2 76.3L632.7 76.5L633.2 76.6L633.7 76.8L634.2 76.9L634.7 77.1L635.2 77.2L635.7 77.4L636.2 77.6L636.7 77.8L637.2 78.0L637.7 78.2L638.2 78.4L638.7 78.6L639.2 78.9L639.7 79.2L640.2 79.5L640.7 79.8L641.2 80.1L641.7 80.5L642.2 81.0L642.7 81.5L643.2 82.1L643.7 82.8L644.2 83.6L644.7 84.5L645.2 85.7L645.7 87.1L646.2 88.8L646.7 91.0L647.2 93.8L647.7 97.3L648.2 101.9L648.7 107.8L649.2 114.8L649.7 121.8L650.2 125.1L650.7 121.8L651.2 114.9L651.7 108.1L652.2 102.5L652.7 98.1L653.2 94.8L653.7 92.2L654.2 90.3L654.7 88.7L655.2 87.5L655.7 86.6L656.2 85.9L656.7 85.3L657.2 84.8L657.7 84.4L658.2 84.1L658.7 83.8L659.2 83.6L659.7 83.5L660.2 83.3L660.7 83.2L661.2 83.2L661.7 83.1L662.2 83.1L662.7 83.0L663.2 83.0L663.7 83.0L664.2 83.0L664.7 83.0L665.2 83.1L665.7 83.1L666.2 83.1L666.7 83.1L667.2 83.2L667.7 83.2L668.2 83.3L668.7 83.3L669.2 83.4L669.7 83.4L670.2 83.5L670.7 83.5L671.2 83.6L671.7 83.6L672.2 83.7L672.7 83.8L673.1 83.8L673.6 83.9L674.1 83.9L674.6 84.0L675.1 84.1L675.6 84.1L676.1 84.2L676.6 84.3L677.1 84.3L677.6 84.4L678.1 84.5L678.6 84.5L679.1 84.6L679.6 84.7L680.1 84.7L680.6 84.8L681.1 84.8L681.6 84.9L682.1 85.0L682.6 85.0L683.1 85.1L683.6 85.2L684.1 85.2L684.6 85.3L685.1 85.4L685.6 85.4L686.1 85.5L686.6 85.6L687.1 85.6L687.6 85.7L688.1 85.8L688.6 85.8L689.1 85.9L689.6 86.0L690.1 86.0L690.6 86.1L691.1 86.2L691.6 86.2L692.1 86.3L692.6 86.4L693.1 86.4L693.6 86.5L694.1 86.5L694.6 86.6L695.1 86.7L695.6 86.7L696.1 86.8L696.6 86.9L697.1 86.9L697.6 87.0L698.1 87.1L698.6 87.1L699.1 87.2L699.6 87.2L700.1 87.3L700.6 87.4L701.1 87.4L701.6 87.5L702.1 87.6L702.6 87.6L703.1 87.7L703.6 87.8L704.1 87.8L704.6 87.9L705.1 87.9L705.6 88.0L706.1 88.1L706.6 88.1L707.1 88.2L707.6 88.3L708.1 88.3L708.6 88.4L709.1 88.5L709.6 88.5L710.1 88.6L710.6 88.7L711.1 88.8L711.6 88.8L712.1 88.9L712.6 89.0L713.1 89.1L713.6 89.1L714.1 89.2L714.6 89.3L715.1 89.4L715.6 89.5L716.1 89.6L716.6 89.6L717.1 89.7L717.6 89.8L718.1 89.9L718.6 90.0L719.1 90.1L719.6 90.2L720.1 90.4L720.6 90.5L721.1 90.6L721.6 90.7L722.1 90.9L722.6 91.0L723.1 91.2L723.6 91.3L724.1 91.5L724.6 91.7L725.1 91.9L725.6 92.1L726.1 92.3L726.6 92.5L727.1 92.8L727.6 93.1L728.1 93.4L728.6 93.7L729.1 94.1L729.6 94.5L730.1 94.9L730.6 95.4L731.1 96.0L731.6 96.6L732.1 97.3L732.6 98.1L733.1 99.0L733.6 100.0L734.1 101.2L734.6 102.6L735.1 104.1L735.6 105.9L736.1 108.0L736.6 110.4L737.1 113.2L737.6 116.5L738.1 120.2L738.6 124.2L739.1 128.5L739.6 132.4L740.1 135.2L740.6 135.9L741.1 134.3L741.6 130.9L742.1 126.8L742.6 122.6L743.1 118.7L743.6 115.2L744.1 112.2L744.6 109.7L745.1 107.4L745.6 105.5L746.1 103.9L746.6 102.5L747.1 101.3L747.6 100.2L748.1 99.3L748.6 98.5L749.1 97.8L749.6 97.2L750.1 96.7L750.6 96.2L751.1 95.8L751.6 95.5L752.1 95.1L752.6 94.8L753.1 94.6L753.6 94.4L754.1 94.1L754.6 94.0L755.1 93.8L755.6 93.6L756.1 93.5L756.6 93.4L757.1 93.3L757.6 93.2L758.0 93.1L758.5 93.0L759.0 92.9L759.5 92.8L760.0 92.8L760.5 92.7L761.0 92.7L761.5 92.6L762.0 92.6L762.5 92.5L763.0 92.5L763.5 92.5L764.0 92.4L764.5 92.4L765.0 92.4L765.5 92.4L766.0 92.3L766.5 92.3L767.0 92.3L767.5 92.3L768.0 92.3L768.5 92.3L769.0 92.3L769.5 92.3L770.0 92.3L770.5 92.2L771.0 92.2L771.5 92.2L772.0 92.2L772.5 92.2L773.0 92.2L773.5 92.2L774.0 92.2L774.5 92.2L775.0 92.2L775.5 92.2L776.0 92.2L776.5 92.2L777.0 92.3L777.5 92.3L778.0 92.3L778.5 92.3L779.0 92.3L779.5 92.3L780.0 92.3L780.5 92.3L781.0 92.3L781.5 92.3L782.0 92.3L782.5 92.3L783.0 92.3L783.5 92.3L784.0 92.4L784.5 92.4L785.0 92.4L785.5 92.4L786.0 92.4L786.5 92.4L787.0 92.4L787.5 92.4L788.0 92.5L788.5 92.5L789.0 92.5L789.5 92.5L790.0 92.5L790.5 92.5L791.0 92.6L791.5 92.6L792.0 92.6L792.5 92.6L793.0 92.6L793.5 92.7L794.0 92.7L794.5 92.7L795.0 92.7L795.5 92.8L796.0 92.8L796.5 92.8L797.0 92.9L797.5 92.9L798.0 92.9L798.5 93.0L799.0 93.0L799.5 93.1L800.0 93.1L800.5 93.2L801.0 93.2L801.5 93.3L802.0 93.3L802.5 93.4L803.0 93.5L803.5 93.6L804.0 93.7L804.5 93.8L805.0 93.9L805.5 94.0L806.0 94.2L806.5 94.3L807.0 94.5L807.5 94.7L808.0 95.0L808.5 95.2L809.0 95.5L809.5 95.9L810.0 96.3L810.5 96.7L811.0 97.3L811.5 97.9L812.0 98.6L812.5 99.5L813.0 100.6L813.5 101.9L814.0 103.4L814.5 105.3L815.0 107.6L815.5 110.5L816.0 114.0L816.5 118.3L817.0 123.3L817.5 128.7L818.0 133.3L818.5 135.1L819.0 132.8L819.5 127.9L820.0 122.3L820.5 117.1L821.0 112.8L821.5 109.2L822.0 106.2L822.5 103.9L823.0 101.9L823.5 100.3L824.0 98.9L824.5 97.8L825.0 96.8L825.5 96.0L826.0 95.3L826.5 94.6L827.0 94.1L827.5 93.5L828.0 93.1L828.5 92.7L829.0 92.2L829.5 91.9L830.0 91.5L830.5 91.1L831.0 90.8L831.5 90.5L832.0 90.1L832.5 89.8L833.0 89.4L833.5 89.0L834.0 88.7L834.5 88.3L835.0 87.9L835.5 87.4L836.0 87.0L836.5 86.5L837.0 86.0L837.5 85.4L838.0 84.8L838.5 84.2L839.0 83.5L839.5 82.8L840.0 82.0L840.5 81.1L841.0 80.2L841.5 79.3L842.0 78.3L842.5 77.3L842.9 76.2L843.4 75.1L843.9 74.1L844.4 73.1L844.9 72.3L845.4 71.5L845.9 71.0L846.4 70.7L846.9 70.7L847.4 71.0L847.9 71.5L848.4 72.2L848.9 73.1L849.4 74.1L849.9 75.2L850.4 76.4L850.9 77.5L851.4 78.6L851.9 79.7L852.4 80.8L852.9 81.7L853.4 82.6L853.9 83.5L854.4 84.2L854.9 84.9L855.4 85.6L855.9 86.2L856.4 86.7L856.9 87.2L857.4 87.7L857.9 88.1L858.4 88.5L858.9 88.8L859.4 89.2L859.9 89.4L860.4 89.7L860.9 90.0L861.4 90.2L861.9 90.4L862.4 90.6L862.9 90.8L863.4 91.0L863.9 91.1L864.4 91.3L864.9 91.4L865.4 91.5L865.9 91.6L866.4 91.7L866.9 91.8L867.4 91.9L867.9 92.0L868.4 92.1L868.9 92.2L869.4 92.3L869.9 92.3L870.4 92.4L870.9 92.5L871.4 92.5L871.9 92.6L872.4 92.6L872.9 92.7L873.4 92.7L873.9 92.8L874.4 92.8L874.9 92.8L875.4 92.9L875.9 92.9L876.4 92.9L876.9 93.0L877.4 93.0L877.9 93.0L878.4 93.1L878.9 93.1L879.4 93.1L879.9 93.1L880.4 93.2L880.9 93.2L881.4 93.2L881.9 93.2L882.4 93.2L882.9 93.3L883.4 93.3L883.9 93.3L884.4 93.3L884.9 93.3L885.4 93.3" fill="none" stroke="#dedede" stroke-width="1.7" stroke-linejoin="round"/>
<circle cx="133.31" cy="58.16" r="5.1" fill="#fff"/>
<circle cx="177.42" cy="151.98" r="5.1" fill="#fff"/>
<circle cx="208.31" cy="116.54" r="5.1" fill="#fff"/>
<circle cx="266.45" cy="156.15" r="5.1" fill="#fff"/>
<circle cx="335.5" cy="56.07" r="5.1" fill="#fff"/>
<circle cx="432.02" cy="143.64" r="5.1" fill="#fff"/>
<circle cx="517.21" cy="160.32" r="5.1" fill="#fff"/>
<circle cx="582.43" cy="66.5" r="5.1" fill="#fff"/>
<circle cx="650.17" cy="139.47" r="5.1" fill="#fff"/>
<circle cx="740.46" cy="139.47" r="5.1" fill="#fff"/>
<circle cx="818.45" cy="137.38" r="5.1" fill="#fff"/>
<circle cx="846.72" cy="70.67" r="5.1" fill="#fff"/>
</svg>
<span class="t ser" style="left:107.19px;top:243px;font-size:8.28px;line-height:9px;color:#59626b;transform:scaleX(0.950);">+12</span>
<span class="t ser" style="left:111.13px;top:268px;font-size:8.28px;line-height:9px;color:#59626b;transform:scaleX(0.950);">+6</span>
<span class="t ser" style="left:115.56px;top:293px;font-size:8.28px;line-height:9px;color:#59626b;transform:scaleX(0.950);">0</span>
<span class="t ser" style="left:112.94px;top:318px;font-size:8.28px;line-height:9px;color:#59626b;transform:scaleX(0.950);">-6</span>
<span class="t ser" style="left:109.01px;top:343px;font-size:8.28px;line-height:9px;color:#59626b;transform:scaleX(0.950);">-12</span>
<span class="t ser" style="left:110.46px;top:210px;font-size:7.7px;line-height:9px;color:#59626b;transform:scaleX(0.950);">dB</span>
<span class="t ser" style="left:132.53px;top:393px;font-size:8.14px;line-height:9px;color:#687078;transform:scaleX(0.950);">20</span>
<span class="t ser" style="left:245.15px;top:393px;font-size:8.14px;line-height:9px;color:#687078;transform:scaleX(0.950);">50</span>
<span class="t ser" style="left:328.41px;top:393px;font-size:8.14px;line-height:9px;color:#687078;transform:scaleX(0.950);">100</span>
<span class="t ser" style="left:526.22px;top:393px;font-size:8.14px;line-height:9px;color:#687078;transform:scaleX(0.950);">500</span>
<span class="t ser" style="left:613.34px;top:393px;font-size:8.14px;line-height:9px;color:#687078;transform:scaleX(0.950);">1k</span>
<span class="t ser" style="left:811.15px;top:393px;font-size:8.14px;line-height:9px;color:#687078;transform:scaleX(0.950);">5k</span>
<span class="t ser" style="left:894.41px;top:393px;font-size:8.14px;line-height:9px;color:#687078;transform:scaleX(0.950);">10k</span>
<span class="t ser" style="left:979.6px;top:393px;font-size:8.14px;line-height:9px;color:#687078;transform:scaleX(0.950);">20k</span>
<span class="t ser" style="left:1007.49px;top:393px;font-size:8.14px;line-height:9px;color:#687078;transform:scaleX(0.950);">Hz</span>
<div class="a" style="left:102px;top:412.4px;width:922px;height:13.5px;background:#000;"></div>
<span class="t b" style="left:511px;top:414px;font-size:11.19px;line-height:12px;color:#fff;transform:scaleX(0.919);">12 Band PEQ Settings</span>
<div class="a" style="left:102px;top:426px;width:922px;height:211px;background:#212b35;"></div>
<svg class="a" style="left:1009px;top:414.5px;" width="10" height="10" viewBox="0 0 10 10">
<path d="M4.28 2.09L4.38 1.25L5.62 1.25L5.72 2.09L6.55 2.43L7.21 1.91L8.09 2.79L7.57 3.45L7.91 4.28L8.75 4.38L8.75 5.62L7.91 5.72L7.57 6.55L8.09 7.21L7.21 8.09L6.55 7.57L5.72 7.91L5.62 8.75L4.38 8.75L4.28 7.91L3.45 7.57L2.79 8.09L1.91 7.21L2.43 6.55L2.09 5.72L1.25 5.62L1.25 4.38L2.09 4.28L2.43 3.45L1.91 2.79L2.79 1.91L3.45 2.43ZM3.40 5.00a1.60 1.60 0 1 0 3.20 0a1.60 1.60 0 1 0 -3.20 0Z" fill="#fff" fill-rule="evenodd" stroke="#fff" stroke-width="0.4" stroke-linejoin="round"/>
</svg>
<div class="a" style="left:112px;top:436.5px;width:40px;height:16px;background:#7fb391;border-radius:2px;"></div>
<span class="t" style="left:119.5px;top:438px;font-size:11.34px;line-height:12px;color:#fff;transform:scaleX(0.871);-webkit-text-stroke:0.3px #fff;">Reset</span>
<span class="t b" style="left:121.5px;top:475px;font-size:12.21px;line-height:14px;color:#fff;transform:scaleX(0.763);-webkit-text-stroke:0.21px #fff;">Gain</span>
<span class="t b" style="left:121.5px;top:520px;font-size:12.21px;line-height:14px;color:#fff;transform:scaleX(0.813);-webkit-text-stroke:0.15px #fff;">Freq</span>
<span class="t b" style="left:135px;top:565px;font-size:12.21px;line-height:14px;color:#fff;transform:scaleX(0.811);-webkit-text-stroke:0.15px #fff;">Q</span>
<span class="t b" style="left:120.2px;top:602px;font-size:12.21px;line-height:14px;color:#fff;transform:scaleX(0.816);-webkit-text-stroke:0.15px #fff;">Type</span>
<svg class="a" style="left:186.3px;top:436px;" width="16" height="16" viewBox="0 0 16 16">
<circle cx="8.1" cy="8" r="7.6" fill="#fff"/></svg>
<span class="t b" style="left:191.98px;top:438px;font-size:11.34px;line-height:12px;color:#000;transform:scaleX(0.800);-webkit-text-stroke:0.15px #000;">1</span>
<svg class="a" style="left:170.9px;top:460.4px;" width="46.8" height="46.8" viewBox="0 0 46.8 46.8">
<path d="M8.57 33.78A18.10 18.10 0 1 1 38.23 33.78" fill="none" stroke="#494e54" stroke-width="8.6"/>
<path d="M8.57 33.78A18.10 18.10 0 1 1 38.92 14.09" fill="none" stroke="#384a5d" stroke-width="8.6"/>
</svg>
<span class="t b" style="left:183.76px;top:477px;font-size:10.9px;line-height:12px;color:#3f4b57;transform:scaleX(0.980);">+8.5</span>
<span class="t b" style="left:189.77px;top:491px;font-size:7.56px;line-height:9px;color:#3f4b57;transform:scaleX(0.900);">dB</span>
<svg class="a" style="left:170.9px;top:505.7px;" width="46.8" height="46.8" viewBox="0 0 46.8 46.8">
<path d="M8.57 33.78A18.10 18.10 0 1 1 38.23 33.78" fill="none" stroke="#eeeeee" stroke-width="8.6"/>
<path d="M8.57 33.78A18.10 18.10 0 0 1 5.42 25.44" fill="none" stroke="#6297cd" stroke-width="8.6"/>
</svg>
<span class="t b" style="left:187.03px;top:524px;font-size:7.7px;line-height:9px;color:#5b90c8;transform:scaleX(0.970);">44.0</span>
<span class="t b" style="left:190.14px;top:536px;font-size:7.56px;line-height:9px;color:#fff;transform:scaleX(0.900);">Hz</span>
<svg class="a" style="left:170.9px;top:550.9px;" width="46.8" height="46.8" viewBox="0 0 46.8 46.8">
<path d="M8.57 33.78A18.10 18.10 0 1 1 38.23 33.78" fill="none" stroke="#494e54" stroke-width="8.6"/>
<path d="M8.57 33.78A18.10 18.10 0 1 1 40.33 17.01" fill="none" stroke="#384a5d" stroke-width="8.6"/>
</svg>
<span class="t b" style="left:188.36px;top:567px;font-size:10.9px;line-height:12px;color:#3f4b57;transform:scaleX(0.980);">12</span>
<svg class="a" style="left:256.4px;top:436px;" width="16" height="16" viewBox="0 0 16 16">
<circle cx="8.1" cy="8" r="7.6" fill="#fff"/></svg>
<span class="t b" style="left:262.08px;top:438px;font-size:11.34px;line-height:12px;color:#000;transform:scaleX(0.800);-webkit-text-stroke:0.15px #000;">2</span>
<svg class="a" style="left:241px;top:460.4px;" width="46.8" height="46.8" viewBox="0 0 46.8 46.8">
<path d="M8.57 33.78A18.10 18.10 0 1 1 38.23 33.78" fill="none" stroke="#eeeeee" stroke-width="8.6"/>
<path d="M8.57 33.78A18.10 18.10 0 0 1 5.44 25.68" fill="none" stroke="#6297cd" stroke-width="8.6"/>
</svg>
<span class="t b" style="left:256.68px;top:477px;font-size:10.9px;line-height:12px;color:#5b90c8;transform:scaleX(0.980);">-14</span>
<span class="t b" style="left:259.87px;top:491px;font-size:7.56px;line-height:9px;color:#fff;transform:scaleX(0.900);">dB</span>
<svg class="a" style="left:241px;top:505.7px;" width="46.8" height="46.8" viewBox="0 0 46.8 46.8">
<path d="M8.57 33.78A18.10 18.10 0 1 1 38.23 33.78" fill="none" stroke="#eeeeee" stroke-width="8.6"/>
<path d="M8.57 33.78A18.10 18.10 0 0 1 5.42 21.34" fill="none" stroke="#6297cd" stroke-width="8.6"/>
</svg>
<span class="t b" style="left:257.13px;top:524px;font-size:7.7px;line-height:9px;color:#5b90c8;transform:scaleX(0.970);">63.0</span>
<span class="t b" style="left:260.24px;top:536px;font-size:7.56px;line-height:9px;color:#fff;transform:scaleX(0.900);">Hz</span>
<svg class="a" style="left:241px;top:550.9px;" width="46.8" height="46.8" viewBox="0 0 46.8 46.8">
<path d="M8.57 33.78A18.10 18.10 0 1 1 38.23 33.78" fill="none" stroke="#eeeeee" stroke-width="8.6"/>
<path d="M8.57 33.78A18.10 18.10 0 1 1 41.25 26.43" fill="none" stroke="#6297cd" stroke-width="8.6"/>
</svg>
<span class="t b" style="left:258.46px;top:567px;font-size:10.9px;line-height:12px;color:#5b90c8;transform:scaleX(0.980);">22</span>
<svg class="a" style="left:326.5px;top:436px;" width="16" height="16" viewBox="0 0 16 16">
<circle cx="8.1" cy="8" r="7.6" fill="#fff"/></svg>
<span class="t b" style="left:332.18px;top:438px;font-size:11.34px;line-height:12px;color:#000;transform:scaleX(0.800);-webkit-text-stroke:0.15px #000;">3</span>
<svg class="a" style="left:311.1px;top:460.4px;" width="46.8" height="46.8" viewBox="0 0 46.8 46.8">
<path d="M8.57 33.78A18.10 18.10 0 1 1 38.23 33.78" fill="none" stroke="#eeeeee" stroke-width="8.6"/>
<path d="M8.57 33.78A18.10 18.10 0 0 1 12.21 9.17" fill="none" stroke="#6297cd" stroke-width="8.6"/>
</svg>
<span class="t b" style="left:325.3px;top:477px;font-size:10.9px;line-height:12px;color:#5b90c8;transform:scaleX(0.980);">-5.5</span>
<span class="t b" style="left:329.97px;top:491px;font-size:7.56px;line-height:9px;color:#fff;transform:scaleX(0.900);">dB</span>
<svg class="a" style="left:311.1px;top:505.7px;" width="46.8" height="46.8" viewBox="0 0 46.8 46.8">
<path d="M8.57 33.78A18.10 18.10 0 1 1 38.23 33.78" fill="none" stroke="#eeeeee" stroke-width="8.6"/>
<path d="M8.57 33.78A18.10 18.10 0 0 1 5.97 18.53" fill="none" stroke="#6297cd" stroke-width="8.6"/>
</svg>
<span class="t b" style="left:327.23px;top:524px;font-size:7.7px;line-height:9px;color:#5b90c8;transform:scaleX(0.970);">81.0</span>
<span class="t b" style="left:330.34px;top:536px;font-size:7.56px;line-height:9px;color:#fff;transform:scaleX(0.900);">Hz</span>
<svg class="a" style="left:311.1px;top:550.9px;" width="46.8" height="46.8" viewBox="0 0 46.8 46.8">
<path d="M8.57 33.78A18.10 18.10 0 1 1 38.23 33.78" fill="none" stroke="#eeeeee" stroke-width="8.6"/>
<path d="M8.57 33.78A18.10 18.10 0 0 1 37.56 12.13" fill="none" stroke="#6297cd" stroke-width="8.6"/>
</svg>
<span class="t b" style="left:327.07px;top:567px;font-size:10.9px;line-height:12px;color:#5b90c8;transform:scaleX(0.980);">8.4</span>
<svg class="a" style="left:396.6px;top:436px;" width="16" height="16" viewBox="0 0 16 16">
<circle cx="8.1" cy="8" r="7.6" fill="#fff"/></svg>
<span class="t b" style="left:402.28px;top:438px;font-size:11.34px;line-height:12px;color:#000;transform:scaleX(0.800);-webkit-text-stroke:0.15px #000;">4</span>
<svg class="a" style="left:381.2px;top:460.4px;" width="46.8" height="46.8" viewBox="0 0 46.8 46.8">
<path d="M8.57 33.78A18.10 18.10 0 1 1 38.23 33.78" fill="none" stroke="#eeeeee" stroke-width="8.6"/>
<path d="M8.57 33.78A18.10 18.10 0 0 1 5.85 27.83" fill="none" stroke="#6297cd" stroke-width="8.6"/>
</svg>
<span class="t b" style="left:396.88px;top:477px;font-size:10.9px;line-height:12px;color:#5b90c8;transform:scaleX(0.980);">-15</span>
<span class="t b" style="left:400.07px;top:491px;font-size:7.56px;line-height:9px;color:#fff;transform:scaleX(0.900);">dB</span>
<svg class="a" style="left:381.2px;top:505.7px;" width="46.8" height="46.8" viewBox="0 0 46.8 46.8">
<path d="M8.57 33.78A18.10 18.10 0 1 1 38.23 33.78" fill="none" stroke="#eeeeee" stroke-width="8.6"/>
<path d="M8.57 33.78A18.10 18.10 0 0 1 8.18 13.61" fill="none" stroke="#6297cd" stroke-width="8.6"/>
</svg>
<span class="t b" style="left:398.37px;top:524px;font-size:7.7px;line-height:9px;color:#5b90c8;transform:scaleX(0.970);">130</span>
<span class="t b" style="left:400.44px;top:536px;font-size:7.56px;line-height:9px;color:#fff;transform:scaleX(0.900);">Hz</span>
<svg class="a" style="left:381.2px;top:550.9px;" width="46.8" height="46.8" viewBox="0 0 46.8 46.8">
<path d="M8.57 33.78A18.10 18.10 0 1 1 38.23 33.78" fill="none" stroke="#eeeeee" stroke-width="8.6"/>
<path d="M8.57 33.78A18.10 18.10 0 0 1 37.56 12.13" fill="none" stroke="#6297cd" stroke-width="8.6"/>
</svg>
<span class="t b" style="left:397.17px;top:567px;font-size:10.9px;line-height:12px;color:#5b90c8;transform:scaleX(0.980);">8.4</span>
<svg class="a" style="left:466.7px;top:436px;" width="16" height="16" viewBox="0 0 16 16">
<circle cx="8.1" cy="8" r="7.6" fill="#fff"/></svg>
<span class="t b" style="left:472.38px;top:438px;font-size:11.34px;line-height:12px;color:#000;transform:scaleX(0.800);-webkit-text-stroke:0.15px #000;">5</span>
<svg class="a" style="left:451.3px;top:460.4px;" width="46.8" height="46.8" viewBox="0 0 46.8 46.8">
<path d="M8.57 33.78A18.10 18.10 0 1 1 38.23 33.78" fill="none" stroke="#eeeeee" stroke-width="8.6"/>
<path d="M8.57 33.78A18.10 18.10 0 1 1 39.45 15.04" fill="none" stroke="#6297cd" stroke-width="8.6"/>
</svg>
<span class="t b" style="left:468.61px;top:477px;font-size:10.9px;line-height:12px;color:#5b90c8;transform:scaleX(0.980);">+9</span>
<span class="t b" style="left:470.17px;top:491px;font-size:7.56px;line-height:9px;color:#fff;transform:scaleX(0.900);">dB</span>
<svg class="a" style="left:451.3px;top:505.7px;" width="46.8" height="46.8" viewBox="0 0 46.8 46.8">
<path d="M8.57 33.78A18.10 18.10 0 1 1 38.23 33.78" fill="none" stroke="#eeeeee" stroke-width="8.6"/>
<path d="M8.57 33.78A18.10 18.10 0 0 1 12.53 8.93" fill="none" stroke="#6297cd" stroke-width="8.6"/>
</svg>
<span class="t b" style="left:468.47px;top:524px;font-size:7.7px;line-height:9px;color:#5b90c8;transform:scaleX(0.970);">228</span>
<span class="t b" style="left:470.54px;top:536px;font-size:7.56px;line-height:9px;color:#fff;transform:scaleX(0.900);">Hz</span>
<svg class="a" style="left:451.3px;top:550.9px;" width="46.8" height="46.8" viewBox="0 0 46.8 46.8">
<path d="M8.57 33.78A18.10 18.10 0 1 1 38.23 33.78" fill="none" stroke="#eeeeee" stroke-width="8.6"/>
<path d="M8.57 33.78A18.10 18.10 0 0 1 23.40 5.30" fill="none" stroke="#6297cd" stroke-width="8.6"/>
</svg>
<span class="t b" style="left:471.73px;top:567px;font-size:10.9px;line-height:12px;color:#5b90c8;transform:scaleX(0.980);">3</span>
<svg class="a" style="left:536.8px;top:436px;" width="16" height="16" viewBox="0 0 16 16">
<circle cx="8.1" cy="8" r="7.6" fill="#fff"/></svg>
<span class="t b" style="left:542.48px;top:438px;font-size:11.34px;line-height:12px;color:#000;transform:scaleX(0.800);-webkit-text-stroke:0.15px #000;">6</span>
<svg class="a" style="left:521.4px;top:460.4px;" width="46.8" height="46.8" viewBox="0 0 46.8 46.8">
<path d="M8.57 33.78A18.10 18.10 0 1 1 38.23 33.78" fill="none" stroke="#eeeeee" stroke-width="8.6"/>
<path d="M8.57 33.78A18.10 18.10 0 0 1 5.42 21.30" fill="none" stroke="#6297cd" stroke-width="8.6"/>
</svg>
<span class="t b" style="left:537.08px;top:477px;font-size:10.9px;line-height:12px;color:#5b90c8;transform:scaleX(0.980);">-12</span>
<span class="t b" style="left:540.27px;top:491px;font-size:7.56px;line-height:9px;color:#fff;transform:scaleX(0.900);">dB</span>
<svg class="a" style="left:521.4px;top:505.7px;" width="46.8" height="46.8" viewBox="0 0 46.8 46.8">
<path d="M8.57 33.78A18.10 18.10 0 1 1 38.23 33.78" fill="none" stroke="#eeeeee" stroke-width="8.6"/>
<path d="M8.57 33.78A18.10 18.10 0 0 1 20.72 5.50" fill="none" stroke="#6297cd" stroke-width="8.6"/>
</svg>
<span class="t b" style="left:538.57px;top:524px;font-size:7.7px;line-height:9px;color:#5b90c8;transform:scaleX(0.970);">500</span>
<span class="t b" style="left:540.64px;top:536px;font-size:7.56px;line-height:9px;color:#fff;transform:scaleX(0.900);">Hz</span>
<svg class="a" style="left:521.4px;top:550.9px;" width="46.8" height="46.8" viewBox="0 0 46.8 46.8">
<path d="M8.57 33.78A18.10 18.10 0 1 1 38.23 33.78" fill="none" stroke="#eeeeee" stroke-width="8.6"/>
<path d="M8.57 33.78A18.10 18.10 0 1 1 40.33 17.01" fill="none" stroke="#6297cd" stroke-width="8.6"/>
</svg>
<span class="t b" style="left:538.86px;top:567px;font-size:10.9px;line-height:12px;color:#5b90c8;transform:scaleX(0.980);">12</span>
<svg class="a" style="left:606.9px;top:436px;" width="16" height="16" viewBox="0 0 16 16">
<circle cx="8.1" cy="8" r="7.6" fill="#fff"/></svg>
<span class="t b" style="left:612.58px;top:438px;font-size:11.34px;line-height:12px;color:#000;transform:scaleX(0.800);-webkit-text-stroke:0.15px #000;">7</span>
<svg class="a" style="left:591.5px;top:460.4px;" width="46.8" height="46.8" viewBox="0 0 46.8 46.8">
<path d="M8.57 33.78A18.10 18.10 0 1 1 38.23 33.78" fill="none" stroke="#eeeeee" stroke-width="8.6"/>
<path d="M8.57 33.78A18.10 18.10 0 0 1 6.51 29.92" fill="none" stroke="#6297cd" stroke-width="8.6"/>
</svg>
<span class="t b" style="left:607.18px;top:477px;font-size:10.9px;line-height:12px;color:#5b90c8;transform:scaleX(0.980);">-16</span>
<span class="t b" style="left:610.37px;top:491px;font-size:7.56px;line-height:9px;color:#fff;transform:scaleX(0.900);">dB</span>
<svg class="a" style="left:591.5px;top:505.7px;" width="46.8" height="46.8" viewBox="0 0 46.8 46.8">
<path d="M8.57 33.78A18.10 18.10 0 1 1 38.23 33.78" fill="none" stroke="#eeeeee" stroke-width="8.6"/>
<path d="M8.57 33.78A18.10 18.10 0 0 1 28.57 6.05" fill="none" stroke="#6297cd" stroke-width="8.6"/>
</svg>
<span class="t b" style="left:605.55px;top:524px;font-size:7.7px;line-height:9px;color:#5b90c8;transform:scaleX(0.970);">1.00k</span>
<span class="t b" style="left:610.74px;top:536px;font-size:7.56px;line-height:9px;color:#fff;transform:scaleX(0.900);">Hz</span>
<svg class="a" style="left:591.5px;top:550.9px;" width="46.8" height="46.8" viewBox="0 0 46.8 46.8">
<path d="M8.57 33.78A18.10 18.10 0 1 1 38.23 33.78" fill="none" stroke="#eeeeee" stroke-width="8.6"/>
<path d="M8.57 33.78A18.10 18.10 0 0 1 29.67 6.42" fill="none" stroke="#6297cd" stroke-width="8.6"/>
</svg>
<span class="t b" style="left:607.47px;top:567px;font-size:10.9px;line-height:12px;color:#5b90c8;transform:scaleX(0.980);">4.5</span>
<svg class="a" style="left:677px;top:436px;" width="16" height="16" viewBox="0 0 16 16">
<circle cx="8.1" cy="8" r="7.6" fill="#fff"/></svg>
<span class="t b" style="left:682.68px;top:438px;font-size:11.34px;line-height:12px;color:#000;transform:scaleX(0.800);-webkit-text-stroke:0.15px #000;">8</span>
<svg class="a" style="left:661.6px;top:460.4px;" width="46.8" height="46.8" viewBox="0 0 46.8 46.8">
<path d="M8.57 33.78A18.10 18.10 0 1 1 38.23 33.78" fill="none" stroke="#eeeeee" stroke-width="8.6"/>
<path d="M8.57 33.78A18.10 18.10 0 0 1 36.23 10.63" fill="none" stroke="#6297cd" stroke-width="8.6"/>
</svg>
<span class="t b" style="left:674.46px;top:477px;font-size:10.9px;line-height:12px;color:#5b90c8;transform:scaleX(0.980);">+6.5</span>
<span class="t b" style="left:680.47px;top:491px;font-size:7.56px;line-height:9px;color:#fff;transform:scaleX(0.900);">dB</span>
<svg class="a" style="left:661.6px;top:505.7px;" width="46.8" height="46.8" viewBox="0 0 46.8 46.8">
<path d="M8.57 33.78A18.10 18.10 0 1 1 38.23 33.78" fill="none" stroke="#eeeeee" stroke-width="8.6"/>
<path d="M8.57 33.78A18.10 18.10 0 0 1 33.98 8.72" fill="none" stroke="#6297cd" stroke-width="8.6"/>
</svg>
<span class="t b" style="left:675.65px;top:524px;font-size:7.7px;line-height:9px;color:#5b90c8;transform:scaleX(0.970);">1.70k</span>
<span class="t b" style="left:680.84px;top:536px;font-size:7.56px;line-height:9px;color:#fff;transform:scaleX(0.900);">Hz</span>
<svg class="a" style="left:661.6px;top:550.9px;" width="46.8" height="46.8" viewBox="0 0 46.8 46.8">
<path d="M8.57 33.78A18.10 18.10 0 1 1 38.23 33.78" fill="none" stroke="#eeeeee" stroke-width="8.6"/>
<path d="M8.57 33.78A18.10 18.10 0 0 1 6.47 17.01" fill="none" stroke="#6297cd" stroke-width="8.6"/>
</svg>
<span class="t b" style="left:674.6px;top:567px;font-size:10.9px;line-height:12px;color:#5b90c8;transform:scaleX(0.980);">0.75</span>
<svg class="a" style="left:747.1px;top:436px;" width="16" height="16" viewBox="0 0 16 16">
<circle cx="8.1" cy="8" r="7.6" fill="#fff"/></svg>
<span class="t b" style="left:752.78px;top:438px;font-size:11.34px;line-height:12px;color:#000;transform:scaleX(0.800);-webkit-text-stroke:0.15px #000;">9</span>
<svg class="a" style="left:731.7px;top:460.4px;" width="46.8" height="46.8" viewBox="0 0 46.8 46.8">
<path d="M8.57 33.78A18.10 18.10 0 1 1 38.23 33.78" fill="none" stroke="#eeeeee" stroke-width="8.6"/>
<path d="M8.57 33.78A18.10 18.10 0 0 1 5.81 19.14" fill="none" stroke="#6297cd" stroke-width="8.6"/>
</svg>
<span class="t b" style="left:747.67px;top:477px;font-size:10.9px;line-height:12px;color:#5b90c8;transform:scaleX(0.980);">-11</span>
<span class="t b" style="left:750.57px;top:491px;font-size:7.56px;line-height:9px;color:#fff;transform:scaleX(0.900);">dB</span>
<svg class="a" style="left:731.7px;top:505.7px;" width="46.8" height="46.8" viewBox="0 0 46.8 46.8">
<path d="M8.57 33.78A18.10 18.10 0 1 1 38.23 33.78" fill="none" stroke="#eeeeee" stroke-width="8.6"/>
<path d="M8.57 33.78A18.10 18.10 0 1 1 38.36 13.21" fill="none" stroke="#6297cd" stroke-width="8.6"/>
</svg>
<span class="t b" style="left:745.75px;top:524px;font-size:7.7px;line-height:9px;color:#5b90c8;transform:scaleX(0.970);">2.95k</span>
<span class="t b" style="left:750.94px;top:536px;font-size:7.56px;line-height:9px;color:#fff;transform:scaleX(0.900);">Hz</span>
<svg class="a" style="left:731.7px;top:550.9px;" width="46.8" height="46.8" viewBox="0 0 46.8 46.8">
<path d="M8.57 33.78A18.10 18.10 0 1 1 38.23 33.78" fill="none" stroke="#eeeeee" stroke-width="8.6"/>
<path d="M8.57 33.78A18.10 18.10 0 1 1 39.79 31.09" fill="none" stroke="#6297cd" stroke-width="8.6"/>
</svg>
<span class="t b" style="left:749.16px;top:567px;font-size:10.9px;line-height:12px;color:#5b90c8;transform:scaleX(0.980);">30</span>
<svg class="a" style="left:817.2px;top:436px;" width="16" height="16" viewBox="0 0 16 16">
<circle cx="8.1" cy="8" r="7.6" fill="#fff"/></svg>
<span class="t b" style="left:820.36px;top:438px;font-size:11.34px;line-height:12px;color:#000;transform:scaleX(0.800);-webkit-text-stroke:0.15px #000;">10</span>
<svg class="a" style="left:801.8px;top:460.4px;" width="46.8" height="46.8" viewBox="0 0 46.8 46.8">
<path d="M8.57 33.78A18.10 18.10 0 1 1 38.23 33.78" fill="none" stroke="#eeeeee" stroke-width="8.6"/>
<path d="M8.57 33.78A18.10 18.10 0 0 1 5.81 19.14" fill="none" stroke="#6297cd" stroke-width="8.6"/>
</svg>
<span class="t b" style="left:817.77px;top:477px;font-size:10.9px;line-height:12px;color:#5b90c8;transform:scaleX(0.980);">-11</span>
<span class="t b" style="left:820.67px;top:491px;font-size:7.56px;line-height:9px;color:#fff;transform:scaleX(0.900);">dB</span>
<svg class="a" style="left:801.8px;top:505.7px;" width="46.8" height="46.8" viewBox="0 0 46.8 46.8">
<path d="M8.57 33.78A18.10 18.10 0 1 1 38.23 33.78" fill="none" stroke="#eeeeee" stroke-width="8.6"/>
<path d="M8.57 33.78A18.10 18.10 0 1 1 41.34 20.98" fill="none" stroke="#6297cd" stroke-width="8.6"/>
</svg>
<span class="t b" style="left:815.85px;top:524px;font-size:7.7px;line-height:9px;color:#5b90c8;transform:scaleX(0.970);">6.15k</span>
<span class="t b" style="left:821.04px;top:536px;font-size:7.56px;line-height:9px;color:#fff;transform:scaleX(0.900);">Hz</span>
<svg class="a" style="left:801.8px;top:550.9px;" width="46.8" height="46.8" viewBox="0 0 46.8 46.8">
<path d="M8.57 33.78A18.10 18.10 0 1 1 38.23 33.78" fill="none" stroke="#eeeeee" stroke-width="8.6"/>
<path d="M8.57 33.78A18.10 18.10 0 1 1 41.39 21.41" fill="none" stroke="#6297cd" stroke-width="8.6"/>
</svg>
<span class="t b" style="left:819.26px;top:567px;font-size:10.9px;line-height:12px;color:#5b90c8;transform:scaleX(0.980);">16</span>
<svg class="a" style="left:887.3px;top:436px;" width="16" height="16" viewBox="0 0 16 16">
<circle cx="8.1" cy="8" r="7.6" fill="#fff"/></svg>
<span class="t b" style="left:890.71px;top:438px;font-size:11.34px;line-height:12px;color:#000;transform:scaleX(0.800);-webkit-text-stroke:0.15px #000;">11</span>
<svg class="a" style="left:871.9px;top:460.4px;" width="46.8" height="46.8" viewBox="0 0 46.8 46.8">
<path d="M8.57 33.78A18.10 18.10 0 1 1 38.23 33.78" fill="none" stroke="#eeeeee" stroke-width="8.6"/>
<path d="M8.57 33.78A18.10 18.10 0 0 1 6.10 18.08" fill="none" stroke="#6297cd" stroke-width="8.6"/>
</svg>
<span class="t b" style="left:883.12px;top:477px;font-size:10.9px;line-height:12px;color:#5b90c8;transform:scaleX(0.980);">-10.5</span>
<span class="t b" style="left:890.77px;top:491px;font-size:7.56px;line-height:9px;color:#fff;transform:scaleX(0.900);">dB</span>
<svg class="a" style="left:871.9px;top:505.7px;" width="46.8" height="46.8" viewBox="0 0 46.8 46.8">
<path d="M8.57 33.78A18.10 18.10 0 1 1 38.23 33.78" fill="none" stroke="#eeeeee" stroke-width="8.6"/>
<path d="M8.57 33.78A18.10 18.10 0 1 1 40.86 28.17" fill="none" stroke="#6297cd" stroke-width="8.6"/>
</svg>
<span class="t b" style="left:886.16px;top:524px;font-size:7.7px;line-height:9px;color:#5b90c8;transform:scaleX(0.970);">11.6k</span>
<span class="t b" style="left:891.14px;top:536px;font-size:7.56px;line-height:9px;color:#fff;transform:scaleX(0.900);">Hz</span>
<svg class="a" style="left:871.9px;top:550.9px;" width="46.8" height="46.8" viewBox="0 0 46.8 46.8">
<path d="M8.57 33.78A18.10 18.10 0 1 1 38.23 33.78" fill="none" stroke="#eeeeee" stroke-width="8.6"/>
<path d="M8.57 33.78A18.10 18.10 0 1 1 41.39 21.41" fill="none" stroke="#6297cd" stroke-width="8.6"/>
</svg>
<span class="t b" style="left:889.36px;top:567px;font-size:10.9px;line-height:12px;color:#5b90c8;transform:scaleX(0.980);">16</span>
<svg class="a" style="left:957.4px;top:436px;" width="16" height="16" viewBox="0 0 16 16">
<circle cx="8.1" cy="8" r="7.6" fill="#fff"/></svg>
<span class="t b" style="left:960.56px;top:438px;font-size:11.34px;line-height:12px;color:#000;transform:scaleX(0.800);-webkit-text-stroke:0.15px #000;">12</span>
<svg class="a" style="left:942px;top:460.4px;" width="46.8" height="46.8" viewBox="0 0 46.8 46.8">
<path d="M8.57 33.78A18.10 18.10 0 1 1 38.23 33.78" fill="none" stroke="#eeeeee" stroke-width="8.6"/>
<path d="M8.57 33.78A18.10 18.10 0 0 1 34.59 9.17" fill="none" stroke="#6297cd" stroke-width="8.6"/>
</svg>
<span class="t b" style="left:954.86px;top:477px;font-size:10.9px;line-height:12px;color:#5b90c8;transform:scaleX(0.980);">+5.5</span>
<span class="t b" style="left:960.87px;top:491px;font-size:7.56px;line-height:9px;color:#fff;transform:scaleX(0.900);">dB</span>
<svg class="a" style="left:942px;top:505.7px;" width="46.8" height="46.8" viewBox="0 0 46.8 46.8">
<path d="M8.57 33.78A18.10 18.10 0 1 1 38.23 33.78" fill="none" stroke="#eeeeee" stroke-width="8.6"/>
<path d="M8.57 33.78A18.10 18.10 0 1 1 39.98 30.65" fill="none" stroke="#6297cd" stroke-width="8.6"/>
</svg>
<span class="t b" style="left:956.05px;top:524px;font-size:7.7px;line-height:9px;color:#5b90c8;transform:scaleX(0.970);">14.6k</span>
<span class="t b" style="left:961.24px;top:536px;font-size:7.56px;line-height:9px;color:#fff;transform:scaleX(0.900);">Hz</span>
<svg class="a" style="left:942px;top:550.9px;" width="46.8" height="46.8" viewBox="0 0 46.8 46.8">
<path d="M8.57 33.78A18.10 18.10 0 1 1 38.23 33.78" fill="none" stroke="#eeeeee" stroke-width="8.6"/>
<path d="M8.57 33.78A18.10 18.10 0 0 1 29.67 6.42" fill="none" stroke="#6297cd" stroke-width="8.6"/>
</svg>
<span class="t b" style="left:957.97px;top:567px;font-size:10.9px;line-height:12px;color:#5b90c8;transform:scaleX(0.980);">4.5</span>
<div class="a" style="left:172px;top:598.8px;width:34px;height:25.6px;background:#1b2029;"></div>
<svg class="a" style="left:172px;top:598.8px;" width="34" height="25.6" viewBox="0 0 34 25.6">
<path d="M0.6 24.6L12.2 10.2H33" fill="none" stroke="#e4e4e4" stroke-width="1.8"/></svg>
<div class="a" style="left:208px;top:599.4px;width:12.3px;height:11px;background:#7fb391;"></div>
<svg class="a" style="left:208px;top:599.4px;" width="12.3" height="11" viewBox="0 0 12.3 11">
<path d="M2.46 7.48L6.15 3.52L9.84 7.48" fill="none" stroke="#fff" stroke-width="1.4"/></svg>
<div class="a" style="left:208px;top:613.4px;width:12.3px;height:11px;background:#7fb391;"></div>
<svg class="a" style="left:208px;top:613.4px;" width="12.3" height="11" viewBox="0 0 12.3 11">
<path d="M2.46 3.52L6.15 7.48L9.84 3.52" fill="none" stroke="#fff" stroke-width="1.4"/></svg>
<div class="a" style="left:939px;top:599px;width:32px;height:24.8px;background:#1b2029;"></div>
<svg class="a" style="left:939px;top:599px;" width="32" height="24.8" viewBox="0 0 32 24.8">
<path d="M0 12.5H6C10.5 12.5 10.5 2.3 14.2 2.3H17.8C21.5 2.3 21.5 12.5 26 12.5H32" fill="none" stroke="#f0f0f0" stroke-width="1.4"/><path d="M6 12.5C10.5 12.5 10.5 22.9 14.2 22.9H17.8C21.5 22.9 21.5 12.5 26 12.5" fill="none" stroke="#f0f0f0" stroke-width="1.4"/></svg>
<div class="a" style="left:975px;top:598.8px;width:12px;height:11.8px;background:#7fb391;"></div>
<svg class="a" style="left:975px;top:598.8px;" width="12" height="11.8" viewBox="0 0 12 11.8">
<path d="M2.4 8.02L6 3.78L9.6 8.02" fill="none" stroke="#fff" stroke-width="1.4"/></svg>
<div class="a" style="left:975px;top:612.9px;width:12px;height:11.8px;background:#7fb391;"></div>
<svg class="a" style="left:975px;top:612.9px;" width="12" height="11.8" viewBox="0 0 12 11.8">
<path d="M2.4 3.78L6 8.02L9.6 3.78" fill="none" stroke="#fff" stroke-width="1.4"/></svg>
<div class="a" style="left:102px;top:637px;width:922px;height:13.6px;background:#000;"></div>
<span class="t b" style="left:540px;top:637px;font-size:11.63px;line-height:13px;color:#fff;transform:scaleX(0.892);-webkit-text-stroke:0.06px #fff;">Dynamics</span>
<div class="a" style="left:102px;top:650.6px;width:922px;height:189.4px;background:#212b35;"></div>
<span class="t b" style="left:117px;top:659px;font-size:8.43px;line-height:10px;color:#fff;transform:scaleX(0.771);-webkit-text-stroke:0.14px #fff;">IN</span>
<span class="t b" style="left:141px;top:659px;font-size:8.43px;line-height:10px;color:#fff;transform:scaleX(0.633);-webkit-text-stroke:0.24px #fff;">GR</span>
<span class="t b" style="left:163px;top:659px;font-size:8.43px;line-height:10px;color:#fff;transform:scaleX(0.702);-webkit-text-stroke:0.19px #fff;">OUT</span>
<div class="a" style="left:117px;top:668.4px;width:6px;height:111.5px;background:repeating-linear-gradient(to bottom,#33383d 0,#33383d 2.4px,transparent 2.4px,transparent 3.9px);"></div>
<div class="a" style="left:142px;top:668.4px;width:6px;height:111.5px;background:repeating-linear-gradient(to bottom,#33383d 0,#33383d 2.4px,transparent 2.4px,transparent 3.9px);"></div>
<div class="a" style="left:166.4px;top:668.4px;width:6px;height:111.5px;background:repeating-linear-gradient(to bottom,#33383d 0,#33383d 2.4px,transparent 2.4px,transparent 3.9px);"></div>
<span class="t b" style="left:126px;top:666px;font-size:6.1px;line-height:7px;color:#fff;transform:scaleX(0.850);">PK</span>
<span class="t b" style="left:175.5px;top:666px;font-size:6.1px;line-height:7px;color:#fff;transform:scaleX(0.850);">PK</span>
<span class="t b" style="left:126px;top:683px;font-size:6.1px;line-height:7px;color:#fff;transform:scaleX(0.850);">+10</span>
<span class="t b" style="left:175.5px;top:683px;font-size:6.1px;line-height:7px;color:#fff;transform:scaleX(0.850);">+10</span>
<span class="t b" style="left:126px;top:704px;font-size:6.1px;line-height:7px;color:#fff;transform:scaleX(0.850);">0</span>
<span class="t b" style="left:175.5px;top:704px;font-size:6.1px;line-height:7px;color:#fff;transform:scaleX(0.850);">0</span>
<span class="t b" style="left:126.5px;top:724px;font-size:6.1px;line-height:7px;color:#fff;transform:scaleX(0.850);">-10</span>
<span class="t b" style="left:176px;top:724px;font-size:6.1px;line-height:7px;color:#fff;transform:scaleX(0.850);">-10</span>
<span class="t b" style="left:126.5px;top:744px;font-size:6.1px;line-height:7px;color:#fff;transform:scaleX(0.850);">-20</span>
<span class="t b" style="left:176px;top:744px;font-size:6.1px;line-height:7px;color:#fff;transform:scaleX(0.850);">-20</span>
<span class="t b" style="left:126.5px;top:760px;font-size:6.1px;line-height:7px;color:#fff;transform:scaleX(0.850);">-40</span>
<span class="t b" style="left:176px;top:760px;font-size:6.1px;line-height:7px;color:#fff;transform:scaleX(0.850);">-40</span>
<span class="t b" style="left:126.5px;top:775px;font-size:6.1px;line-height:7px;color:#fff;transform:scaleX(0.850);">-60</span>
<span class="t b" style="left:176px;top:775px;font-size:6.1px;line-height:7px;color:#fff;transform:scaleX(0.850);">-60</span>
<span class="t b" style="left:155.31px;top:666px;font-size:6.1px;line-height:7px;color:#fff;transform:scaleX(0.850);">0</span>
<span class="t b" style="left:150.7px;top:683px;font-size:6.1px;line-height:7px;color:#fff;transform:scaleX(0.850);">-10</span>
<span class="t b" style="left:150.7px;top:704px;font-size:6.1px;line-height:7px;color:#fff;transform:scaleX(0.850);">-20</span>
<span class="t b" style="left:150.7px;top:724px;font-size:6.1px;line-height:7px;color:#fff;transform:scaleX(0.850);">-30</span>
<span class="t b" style="left:150.7px;top:744px;font-size:6.1px;line-height:7px;color:#fff;transform:scaleX(0.850);">-40</span>
<span class="t b" style="left:150.7px;top:760px;font-size:6.1px;line-height:7px;color:#fff;transform:scaleX(0.850);">-60</span>
<span class="t b" style="left:150.7px;top:775px;font-size:6.1px;line-height:7px;color:#fff;transform:scaleX(0.850);">-80</span>
<div class="a" style="left:212px;top:661px;width:146.6px;height:121.4px;background:#191d26;"></div>
<svg class="a" style="left:212px;top:661px;" width="146.6" height="121.4" viewBox="0 0 146.6 121.4">
<path d="M38 0V121.4" stroke="#3a3d3e" stroke-width="1" fill="none"/>
<path d="M1 91.3H145.6" stroke="#3a3d3e" stroke-width="1" fill="none"/>
<path d="M74 0V121.4" stroke="#3a3d3e" stroke-width="1" fill="none"/>
<path d="M1 61.3H145.6" stroke="#3a3d3e" stroke-width="1" fill="none"/>
<path d="M110 0V121.4" stroke="#3a3d3e" stroke-width="1" fill="none"/>
<path d="M1 31.3H145.6" stroke="#3a3d3e" stroke-width="1" fill="none"/>
<path d="M2 121.3L62 71.3L129.2 43.3L130.4 43.7" fill="none" stroke="#e2493f" stroke-width="1.8"/>
<rect x="1" y="41.8" width="144.6" height="2.4" fill="#e4e4e4"/>
<rect x="1" y="69.8" width="144.6" height="2.4" fill="#e4e4e4"/>
</svg>
<span class="t" style="left:200.12px;top:657px;font-size:8.72px;line-height:10px;color:#5f676f;transform:scaleX(0.800);">0</span>
<span class="t" style="left:355.46px;top:793px;font-size:8.72px;line-height:10px;color:#5f676f;transform:scaleX(0.800);">0</span>
<span class="t" style="left:193.92px;top:687px;font-size:8.72px;line-height:10px;color:#5f676f;transform:scaleX(0.800);">-15</span>
<span class="t" style="left:316.36px;top:793px;font-size:8.72px;line-height:10px;color:#5f676f;transform:scaleX(0.800);">-15</span>
<span class="t" style="left:193.92px;top:717px;font-size:8.72px;line-height:10px;color:#5f676f;transform:scaleX(0.800);">-30</span>
<span class="t" style="left:280.36px;top:793px;font-size:8.72px;line-height:10px;color:#5f676f;transform:scaleX(0.800);">-30</span>
<span class="t" style="left:193.92px;top:747px;font-size:8.72px;line-height:10px;color:#5f676f;transform:scaleX(0.800);">-45</span>
<span class="t" style="left:244.36px;top:793px;font-size:8.72px;line-height:10px;color:#5f676f;transform:scaleX(0.800);">-45</span>
<span class="t" style="left:193.92px;top:777px;font-size:8.72px;line-height:10px;color:#5f676f;transform:scaleX(0.800);">-60</span>
<span class="t" style="left:208.36px;top:793px;font-size:8.72px;line-height:10px;color:#5f676f;transform:scaleX(0.800);">-60</span>
<div class="a" style="left:367.4px;top:661px;width:360.5px;height:119.5px;background:#1a1f27;border-radius:2px;"></div>
<div class="a" style="left:367.4px;top:661px;width:360.5px;height:11px;background:#000;border-radius:2px 2px 0 0;"></div>
<span class="t b" style="left:521px;top:660px;font-size:11.05px;line-height:12px;color:#fff;transform:scaleX(0.830);-webkit-text-stroke:0.12px #fff;">Compressor</span>
<div class="a" style="left:732.8px;top:661px;width:140px;height:119.5px;background:#1a1f27;border-radius:2px;"></div>
<div class="a" style="left:732.8px;top:661px;width:140px;height:11px;background:#000;border-radius:2px 2px 0 0;"></div>
<span class="t b" style="left:783.5px;top:660px;font-size:11.05px;line-height:12px;color:#fff;transform:scaleX(0.871);-webkit-text-stroke:0.08px #fff;">Make up</span>
<div class="a" style="left:878px;top:661px;width:139.9px;height:119.5px;background:#1a1f27;border-radius:2px;"></div>
<div class="a" style="left:878px;top:661px;width:139.9px;height:11px;background:#000;border-radius:2px 2px 0 0;"></div>
<span class="t b" style="left:932.5px;top:660px;font-size:11.05px;line-height:12px;color:#fff;transform:scaleX(0.855);-webkit-text-stroke:0.09px #fff;">Limiter</span>
<span class="t b" style="left:412.7px;top:689px;font-size:12.21px;line-height:14px;color:#fff;transform:scaleX(0.783);-webkit-text-stroke:0.18px #fff;">Ratio</span>
<svg class="a" style="left:400.7px;top:714.5px;" width="49" height="49" viewBox="0 0 49 49">
<path d="M8.94 35.40A19.00 19.00 0 1 1 40.06 35.40" fill="none" stroke="#eeeeee" stroke-width="9"/>
<path d="M8.94 35.40A19.00 19.00 0 0 1 6.15 19.58" fill="none" stroke="#6297cd" stroke-width="9"/>
</svg>
<span class="t b" style="left:417.64px;top:732px;font-size:10.9px;line-height:12px;color:#5b90c8;transform:scaleX(0.960);">1:2</span>
<span class="t b" style="left:482.5px;top:689px;font-size:12.21px;line-height:14px;color:#fff;transform:scaleX(0.761);-webkit-text-stroke:0.21px #fff;">Threshold</span>
<svg class="a" style="left:481.1px;top:714.5px;" width="49" height="49" viewBox="0 0 49 49">
<path d="M8.94 35.40A19.00 19.00 0 1 1 40.06 35.40" fill="none" stroke="#eeeeee" stroke-width="9"/>
<path d="M8.94 35.40A19.00 19.00 0 0 1 17.74 6.74" fill="none" stroke="#6297cd" stroke-width="9"/>
</svg>
<span class="t b" style="left:498.04px;top:732px;font-size:10.9px;line-height:12px;color:#5b90c8;transform:scaleX(0.960);">-35</span>
<span class="t b" style="left:500.81px;top:748px;font-size:7.56px;line-height:9px;color:#fff;transform:scaleX(0.950);">dB</span>
<span class="t b" style="left:570.3px;top:689px;font-size:12.21px;line-height:14px;color:#fff;transform:scaleX(0.774);-webkit-text-stroke:0.19px #fff;">Attack</span>
<svg class="a" style="left:561px;top:714.5px;" width="49" height="49" viewBox="0 0 49 49">
<path d="M8.94 35.40A19.00 19.00 0 1 1 40.06 35.40" fill="none" stroke="#eeeeee" stroke-width="9"/>
<path d="M8.94 35.40A19.00 19.00 0 0 1 12.03 10.16" fill="none" stroke="#6297cd" stroke-width="9"/>
</svg>
<span class="t b" style="left:582.59px;top:732px;font-size:10.9px;line-height:12px;color:#5b90c8;transform:scaleX(0.960);">1</span>
<span class="t b" style="left:579.87px;top:748px;font-size:8.2px;line-height:9px;color:#fff;transform:scaleX(0.950);">ms</span>
<span class="t b" style="left:647px;top:689px;font-size:12.21px;line-height:14px;color:#fff;transform:scaleX(0.771);-webkit-text-stroke:0.2px #fff;">Release</span>
<svg class="a" style="left:641.3px;top:714.5px;" width="49" height="49" viewBox="0 0 49 49">
<path d="M8.94 35.40A19.00 19.00 0 1 1 40.06 35.40" fill="none" stroke="#eeeeee" stroke-width="9"/>
<path d="M8.94 35.40A19.00 19.00 0 0 1 24.50 5.50" fill="none" stroke="#6297cd" stroke-width="9"/>
</svg>
<span class="t b" style="left:657.07px;top:732px;font-size:10.9px;line-height:12px;color:#5b90c8;transform:scaleX(0.960);">400</span>
<span class="t b" style="left:660.17px;top:748px;font-size:8.2px;line-height:9px;color:#fff;transform:scaleX(0.950);">ms</span>
<span class="t b" style="left:794.3px;top:689px;font-size:12.21px;line-height:14px;color:#fff;transform:scaleX(0.778);-webkit-text-stroke:0.19px #fff;">Gain</span>
<svg class="a" style="left:781.3px;top:714.5px;" width="49" height="49" viewBox="0 0 49 49">
<path d="M8.94 35.40A19.00 19.00 0 1 1 40.06 35.40" fill="none" stroke="#eeeeee" stroke-width="9"/>
<path d="M8.94 35.40A19.00 19.00 0 0 1 24.50 5.50" fill="none" stroke="#6297cd" stroke-width="9"/>
</svg>
<span class="t b" style="left:802.89px;top:732px;font-size:10.9px;line-height:12px;color:#5b90c8;transform:scaleX(0.960);">0</span>
<span class="t b" style="left:801.01px;top:748px;font-size:7.56px;line-height:9px;color:#fff;transform:scaleX(0.950);">dB</span>
<span class="t b" style="left:928.2px;top:689px;font-size:12.21px;line-height:14px;color:#fff;transform:scaleX(0.759);-webkit-text-stroke:0.21px #fff;">Threshold</span>
<svg class="a" style="left:926.3px;top:714.5px;" width="49" height="49" viewBox="0 0 49 49">
<path d="M8.94 35.40A19.00 19.00 0 1 1 40.06 35.40" fill="none" stroke="#eeeeee" stroke-width="9"/>
<path d="M8.94 35.40A19.00 19.00 0 0 1 36.07 9.43" fill="none" stroke="#6297cd" stroke-width="9"/>
</svg>
<span class="t b" style="left:943.24px;top:732px;font-size:10.9px;line-height:12px;color:#5b90c8;transform:scaleX(0.960);">-21</span>
<span class="t b" style="left:946.01px;top:748px;font-size:7.56px;line-height:9px;color:#fff;transform:scaleX(0.950);">dB</span>
</body></html>
